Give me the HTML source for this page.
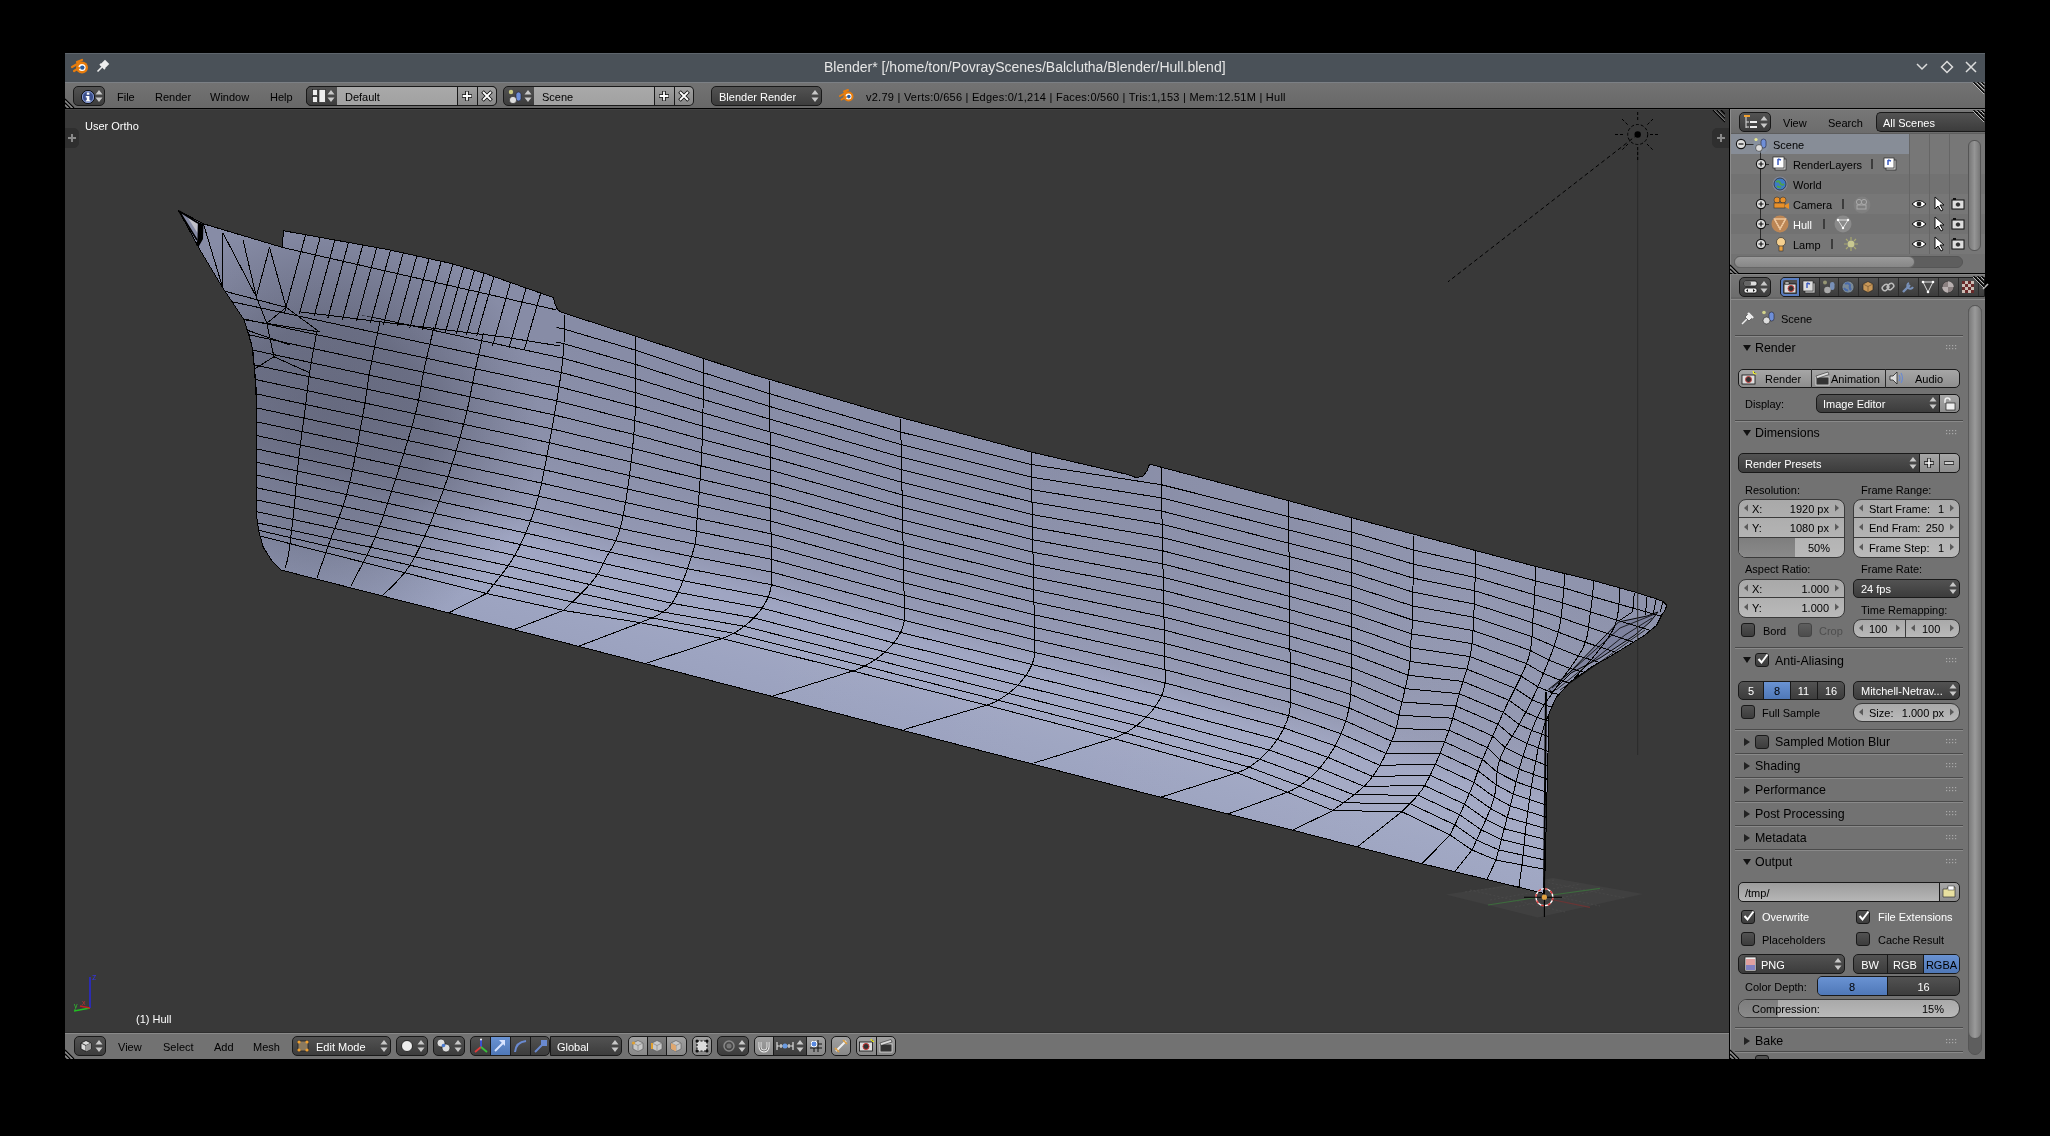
<!DOCTYPE html>
<html><head><meta charset="utf-8"><style>*{margin:0;padding:0;box-sizing:border-box}
html,body{width:2050px;height:1136px;background:#000;overflow:hidden;font-family:"Liberation Sans",sans-serif;font-size:11px;color:#000}
#win{position:absolute;left:0;top:0;width:2050px;height:1136px}
.a{position:absolute}
.t{will-change:transform;position:absolute;white-space:nowrap;line-height:12px;font-size:11px;color:#000}
.w{color:#fff}
/* generic widgets */
.menu{position:absolute;border:1px solid #191919;border-radius:4px;background:linear-gradient(#555,#373737)}
.reg{position:absolute;border:1px solid #191919;border-radius:4px;background:linear-gradient(#a6a6a6,#8c8c8c)}
.num{position:absolute;border:1px solid #191919;border-radius:4px;background:linear-gradient(#a0a0a0,#b4b4b4)}
.txt{position:absolute;border:1px solid #191919;border-radius:4px;background:linear-gradient(#999,#b2b2b2)}
.chk{position:absolute;width:14px;height:14px;border:1px solid #191919;border-radius:3px;background:linear-gradient(#555,#373737)}
.hdr{position:absolute;background:#727272}
.sepl{position:absolute;height:1px;background:#5f5f5f;border-bottom:1px solid #858585;height:2px}
.ptri{position:absolute;width:0;height:0}
.grip{position:absolute;width:13px;height:5px;background-image:radial-gradient(circle,#9a9a9a 0.8px,transparent 1px);background-size:3px 3px}
</style></head><body>
<div id="win">
<div class="a" style="left:65px;top:53px;width:1920px;height:1006px;background:#727272;"></div><div class="a" style="left:65px;top:53px;width:1920px;height:29px;background:#4a5158;"></div><div class="a" style="left:65px;top:53px;width:1920px;height:1px;background:#5e656c;"></div><div class="t" style="left:824px;top:61px;color:#e6e6e6;font-size:14px;">Blender* [/home/ton/PovrayScenes/Balclutha/Blender/Hull.blend]</div><svg class="a" style="left:70px;top:58px" width="20" height="18" viewBox="0 0 20 18"><circle cx="12" cy="9.5" r="6" fill="#e87d0d"/><circle cx="12" cy="9.5" r="3.6" fill="#fff"/><circle cx="12.3" cy="9.6" r="2.2" fill="#2b5b9a"/><path d="M2,9 L9,5 M4,13 L9,10 M7,4 L12,2" stroke="#e87d0d" stroke-width="2.2" stroke-linecap="round"/></svg><svg class="a" style="left:96px;top:59px" width="14" height="14" viewBox="0 0 14 14"><path d="M1.5,12.5 L6,8" stroke="#eee" stroke-width="1.6"/><path d="M5,6 L8,9 L12,5 L9,2Z M4,5 L9,10" stroke="#eee" stroke-width="1.8" fill="#eee"/></svg><svg class="a" style="left:1914px;top:60px" width="16" height="14" viewBox="0 0 16 14"><path d="M3,4 L8,9 L13,4" stroke="#dcdcdc" stroke-width="1.5" fill="none"/></svg><svg class="a" style="left:1939px;top:59px" width="16" height="16" viewBox="0 0 16 16"><path d="M8,2.5 L13.5,8 L8,13.5 L2.5,8Z" stroke="#dcdcdc" stroke-width="1.5" fill="none"/></svg><svg class="a" style="left:1963px;top:60px" width="16" height="14" viewBox="0 0 16 14"><path d="M3,2 L13,12 M13,2 L3,12" stroke="#dcdcdc" stroke-width="1.5"/></svg><div class="a" style="left:65px;top:82px;width:1920px;height:26px;background:linear-gradient(#737373,#686868);"></div><div class="a" style="left:65px;top:82px;width:1920px;height:1px;background:#7c8085;"></div><div class="a" style="left:65px;top:108px;width:1920px;height:1px;background:#000;"></div><svg class="a" style="left:65px;top:96px" width="12" height="12" viewBox="0 0 12 12"><path d="M0,3 L9,12 M0,7 L5,12 M0,11 L1,12" stroke="#000" stroke-width="1.3"/><path d="M0,4.5 L7.5,12 M0,8.5 L3.5,12" stroke="#a0a0a0" stroke-width="1"/></svg><svg class="a" style="left:1973px;top:82px" width="12" height="12" viewBox="0 0 12 12"><path d="M0.5,0 L11.5,11 M4.5,0 L11.5,7 M8.5,0 L11.5,3" stroke="#000" stroke-width="1.2"/><path d="M0,1 L11,12 M4,1 L11,8 M8,1 L11,4" stroke="#c8c8c8" stroke-width="0.9"/></svg><div class="a" style="left:73px;top:86px;width:32px;height:20px;background:linear-gradient(#525252,#3c3c3c);border:1px solid #191919;border-radius:5px;"></div><svg class="a" style="left:80px;top:89px" width="16" height="16" viewBox="0 0 16 16"><circle cx="8" cy="8" r="6.6" fill="#3b4f8c" stroke="#111" stroke-width="1"/><circle cx="8" cy="8" r="5.6" fill="none" stroke="#8fa3d8" stroke-width="0.9"/><rect x="6.8" y="3.5" width="2.6" height="2.2" fill="#fff"/><path d="M5.8,7 L9.4,7 L9.4,11.2 L10.4,11.2 L10.4,12.6 L5.8,12.6 L5.8,11.2 L6.8,11.2 L6.8,8.4 L5.8,8.4Z" fill="#fff"/></svg><svg class="a" style="left:94.5px;top:89px" width="8" height="14" viewBox="0 0 8 14"><path d="M4,1 L7.5,5.5 L0.5,5.5Z M4,13 L7.5,8.5 L0.5,8.5Z" fill="#c8c8c8"/></svg><div class="t" style="left:117px;top:91px;color:#000;font-size:11px;">File</div><div class="t" style="left:155px;top:91px;color:#000;font-size:11px;">Render</div><div class="t" style="left:210px;top:91px;color:#000;font-size:11px;">Window</div><div class="t" style="left:270px;top:91px;color:#000;font-size:11px;">Help</div><div class="a" style="left:306px;top:86px;width:191px;height:20px;background:#a3a3a3;border:1px solid #191919;border-radius:5px;"></div><div class="a" style="left:306px;top:86px;width:32px;height:20px;background:linear-gradient(#525252,#3c3c3c);border:1px solid #191919;border-radius:5px 0 0 5px"></div><svg class="a" style="left:312px;top:89px" width="14" height="14" viewBox="0 0 14 14"><rect x="0.5" y="0.5" width="5" height="6" fill="#eee" stroke="#111" stroke-width="0.6"/><rect x="0.5" y="7.5" width="5" height="6" fill="#eee" stroke="#111" stroke-width="0.6"/><rect x="7" y="0.5" width="6.5" height="13" fill="#eee" stroke="#111" stroke-width="0.6"/></svg><svg class="a" style="left:327px;top:89px" width="8" height="14" viewBox="0 0 8 14"><path d="M4,1 L7.5,5.5 L0.5,5.5Z M4,13 L7.5,8.5 L0.5,8.5Z" fill="#c8c8c8"/></svg><div class="a" style="left:337px;top:86px;width:121px;height:20px;background:linear-gradient(#a9a9a9,#a1a1a1);border-top:1px solid #191919;border-bottom:1px solid #191919"></div><div class="t" style="left:345px;top:91px;color:#000;font-size:11px;">Default</div><div class="a" style="left:457px;top:86px;width:40px;height:20px;background:linear-gradient(#a0a0a0,#878787);border:1px solid #191919;border-left:none;border-radius:0 5px 5px 0"></div><div class="a" style="left:457px;top:86px;width:1px;height:20px;background:#191919;"></div><div class="a" style="left:477px;top:86px;width:1px;height:20px;background:#191919;"></div><svg class="a" style="left:460px;top:89px" width="14" height="14" viewBox="0 0 14 14"><path d="M7,2 V12 M2,7 H12" stroke="#111" stroke-width="3.6"/><path d="M7,2.6 V11.4 M2.6,7 H11.4" stroke="#fff" stroke-width="1.8"/></svg><svg class="a" style="left:480px;top:89px" width="14" height="14" viewBox="0 0 14 14"><path d="M2.5,2.5 L11.5,11.5 M11.5,2.5 L2.5,11.5" stroke="#111" stroke-width="3.6"/><path d="M3,3 L11,11 M11,3 L3,11" stroke="#fff" stroke-width="1.8"/></svg><div class="a" style="left:503px;top:86px;width:32px;height:20px;background:linear-gradient(#525252,#3c3c3c);border:1px solid #191919;border-radius:5px 0 0 5px"></div><svg class="a" style="left:508px;top:89px" width="16" height="16" viewBox="0 0 16 16"><circle cx="3" cy="3" r="2.2" fill="#e8e890" opacity="0.8"/><rect x="8" y="3" width="5" height="9" rx="2.5" fill="#6f8fd8" stroke="#223" stroke-width="0.6"/><circle cx="5" cy="11" r="3.6" fill="#ddd" stroke="#222" stroke-width="0.6"/></svg><svg class="a" style="left:524px;top:89px" width="8" height="14" viewBox="0 0 8 14"><path d="M4,1 L7.5,5.5 L0.5,5.5Z M4,13 L7.5,8.5 L0.5,8.5Z" fill="#c8c8c8"/></svg><div class="a" style="left:534px;top:86px;width:121px;height:20px;background:linear-gradient(#a9a9a9,#a1a1a1);border-top:1px solid #191919;border-bottom:1px solid #191919"></div><div class="t" style="left:542px;top:91px;color:#000;font-size:11px;">Scene</div><div class="a" style="left:654px;top:86px;width:40px;height:20px;background:linear-gradient(#a0a0a0,#878787);border:1px solid #191919;border-left:none;border-radius:0 5px 5px 0"></div><div class="a" style="left:654px;top:86px;width:1px;height:20px;background:#191919;"></div><div class="a" style="left:674px;top:86px;width:1px;height:20px;background:#191919;"></div><svg class="a" style="left:657px;top:89px" width="14" height="14" viewBox="0 0 14 14"><path d="M7,2 V12 M2,7 H12" stroke="#111" stroke-width="3.6"/><path d="M7,2.6 V11.4 M2.6,7 H11.4" stroke="#fff" stroke-width="1.8"/></svg><svg class="a" style="left:677px;top:89px" width="14" height="14" viewBox="0 0 14 14"><path d="M2.5,2.5 L11.5,11.5 M11.5,2.5 L2.5,11.5" stroke="#111" stroke-width="3.6"/><path d="M3,3 L11,11 M11,3 L3,11" stroke="#fff" stroke-width="1.8"/></svg><div class="a" style="left:711px;top:86px;width:111px;height:20px;background:linear-gradient(#525252,#3c3c3c);border:1px solid #191919;border-radius:5px;"></div><div class="t" style="left:719px;top:91px;color:#fff;font-size:11px;">Blender Render</div><svg class="a" style="left:811px;top:89px" width="8" height="14" viewBox="0 0 8 14"><path d="M4,1 L7.5,5.5 L0.5,5.5Z M4,13 L7.5,8.5 L0.5,8.5Z" fill="#c8c8c8"/></svg><svg class="a" style="left:838px;top:88px" width="18" height="16" viewBox="0 0 18 16"><circle cx="10.5" cy="8.5" r="5" fill="#e87d0d"/><circle cx="10.5" cy="8.5" r="3" fill="#fff"/><circle cx="10.8" cy="8.6" r="1.8" fill="#2b5b9a"/><path d="M2,8 L8,4.5 M3.5,11.5 L8,9 M6,3.5 L10,2" stroke="#e87d0d" stroke-width="2" stroke-linecap="round"/></svg><div class="t" style="left:866px;top:91px;color:#000;font-size:11px;letter-spacing:0.25px">v2.79 | Verts:0/656 | Edges:0/1,214 | Faces:0/560 | Tris:1,153 | Mem:12.51M | Hull</div><div class="a" style="left:65px;top:109px;width:1664px;height:924px;background:#393939;"></div><div class="a" style="left:65px;top:109px;width:1664px;height:1px;background:#454545;"></div><div class="t" style="left:85px;top:120px;color:#fff;font-size:11px;">User Ortho</div><div class="t" style="left:136px;top:1013px;color:#fff;font-size:11px;">(1) Hull</div><svg class="a" style="left:1440px;top:870px" width="210" height="55" viewBox="0 0 210 55"><polygon points="5.7,24.4 113,8 203,24 97.7,47.4" fill="#404040"/><path d="M25,22 L115,10 M50,30 L140,14 M75,37 L165,19 M30,20 L125,42 M65,15 L160,36 M100,11 L185,28" stroke="#4a4a4a" stroke-width="0.8" stroke-dasharray="2,2"/></svg><svg class="a" style="left:0;top:0" width="2050" height="1136" viewBox="0 0 2050 1136">
<defs>
<linearGradient id="hg" gradientUnits="userSpaceOnUse" x1="900" y1="428.7" x2="827.5" y2="709.4">
<stop offset="0" stop-color="#878ca6"/><stop offset="0.4" stop-color="#8c91ab"/><stop offset="0.6" stop-color="#9398b3"/><stop offset="0.7" stop-color="#9fa5c2"/><stop offset="0.82" stop-color="#a1a7c3"/><stop offset="0.92" stop-color="#9da4c1"/><stop offset="1" stop-color="#9ba2bf"/></linearGradient>
<radialGradient id="hd" gradientUnits="userSpaceOnUse" cx="325" cy="430" r="215">
<stop offset="0" stop-color="#282a37" stop-opacity="0.39"/><stop offset="0.48" stop-color="#282a37" stop-opacity="0.33"/><stop offset="0.83" stop-color="#282a37" stop-opacity="0.1"/><stop offset="1" stop-color="#282a37" stop-opacity="0"/>
</radialGradient>
<linearGradient id="hx" gradientUnits="userSpaceOnUse" x1="700" y1="0" x2="1400" y2="0"><stop offset="0" stop-color="#fff" stop-opacity="0"/><stop offset="1" stop-color="#fff" stop-opacity="0.045"/></linearGradient>
<radialGradient id="hl" gradientUnits="userSpaceOnUse" cx="1480" cy="600" r="200">
<stop offset="0" stop-color="#c8cce8" stop-opacity="0.1"/><stop offset="1" stop-color="#c0c4e0" stop-opacity="0"/>
</radialGradient>
<clipPath id="hc"><polygon points="178.5,210.6 203.4,223.8 282.7,247.5 283.2,230.7 386.6,249.3 450,263.2 485,273.4 526,288 553.4,297.5 555,304 557.5,309.5 561.2,312.2 635.9,336.3 703.2,358.3 750,373.7 880,411.7 900.7,417.5 1031.2,452 1128,474.5 1136,477.6 1143,476 1147,471 1149.5,464.1 1288.5,500.7 1380,525.3 1536.7,566.7 1593.9,580.7 1635.3,592.2 1654.6,598.3 1663,601.5 1667,605.4 1664.5,611 1661.7,615 1656.4,625.6 1645,635 1631.8,643.2 1608.9,657.3 1593,666 1570,682 1556,697.8 1549,713.7 1544.5,891.5 1543.3,893.3 1420,863.2 1292,830 1150,794.5 772,696.4 500,626 280.8,570 272,561 263,546.8 258.5,530 256.6,516 256.3,400 254.5,369 251.9,346 244,319.7 222.8,288 200,250 186,224"/></clipPath>
<clipPath id="wc"><polygon points="222.8,290 290,305 380,318 483,330 545,342 556,344 557,309.5 561.2,312.2 635.9,336.3 703.2,358.3 750,373.7 880,411.7 900.7,417.5 1031.2,452 1128,474.5 1136,477.6 1143,476 1147,471 1149.5,464.1 1288.5,500.7 1380,525.3 1536.7,566.7 1593.9,580.7 1635.3,592.2 1654.6,598.3 1663,601.5 1667,605.4 1664.5,611 1661.7,615 1656.4,625.6 1645,635 1631.8,643.2 1608.9,657.3 1593,666 1570,682 1556,697.8 1549,713.7 1544.5,891.5 1543.3,893.3 1420,863.2 1292,830 1150,794.5 772,696.4 500,626 280.8,570 272,561 263,546.8 258.5,530 256.6,516 256.3,400 254.5,369 251.9,346 244,319.7"/></clipPath>
</defs>
<polygon points="178.5,210.6 203.4,223.8 282.7,247.5 283.2,230.7 386.6,249.3 450,263.2 485,273.4 526,288 553.4,297.5 555,304 557.5,309.5 561.2,312.2 635.9,336.3 703.2,358.3 750,373.7 880,411.7 900.7,417.5 1031.2,452 1128,474.5 1136,477.6 1143,476 1147,471 1149.5,464.1 1288.5,500.7 1380,525.3 1536.7,566.7 1593.9,580.7 1635.3,592.2 1654.6,598.3 1663,601.5 1667,605.4 1664.5,611 1661.7,615 1656.4,625.6 1645,635 1631.8,643.2 1608.9,657.3 1593,666 1570,682 1556,697.8 1549,713.7 1544.5,891.5 1543.3,893.3 1420,863.2 1292,830 1150,794.5 772,696.4 500,626 280.8,570 272,561 263,546.8 258.5,530 256.6,516 256.3,400 254.5,369 251.9,346 244,319.7 222.8,288 200,250 186,224" fill="url(#hg)"/>
<polygon points="178.5,210.6 203.4,223.8 282.7,247.5 283.2,230.7 386.6,249.3 450,263.2 485,273.4 526,288 553.4,297.5 555,304 557.5,309.5 561.2,312.2 635.9,336.3 703.2,358.3 750,373.7 880,411.7 900.7,417.5 1031.2,452 1128,474.5 1136,477.6 1143,476 1147,471 1149.5,464.1 1288.5,500.7 1380,525.3 1536.7,566.7 1593.9,580.7 1635.3,592.2 1654.6,598.3 1663,601.5 1667,605.4 1664.5,611 1661.7,615 1656.4,625.6 1645,635 1631.8,643.2 1608.9,657.3 1593,666 1570,682 1556,697.8 1549,713.7 1544.5,891.5 1543.3,893.3 1420,863.2 1292,830 1150,794.5 772,696.4 500,626 280.8,570 272,561 263,546.8 258.5,530 256.6,516 256.3,400 254.5,369 251.9,346 244,319.7 222.8,288 200,250 186,224" fill="url(#hd)"/>
<polygon points="178.5,210.6 203.4,223.8 282.7,247.5 283.2,230.7 386.6,249.3 450,263.2 485,273.4 526,288 553.4,297.5 555,304 557.5,309.5 561.2,312.2 635.9,336.3 703.2,358.3 750,373.7 880,411.7 900.7,417.5 1031.2,452 1128,474.5 1136,477.6 1143,476 1147,471 1149.5,464.1 1288.5,500.7 1380,525.3 1536.7,566.7 1593.9,580.7 1635.3,592.2 1654.6,598.3 1663,601.5 1667,605.4 1664.5,611 1661.7,615 1656.4,625.6 1645,635 1631.8,643.2 1608.9,657.3 1593,666 1570,682 1556,697.8 1549,713.7 1544.5,891.5 1543.3,893.3 1420,863.2 1292,830 1150,794.5 772,696.4 500,626 280.8,570 272,561 263,546.8 258.5,530 256.6,516 256.3,400 254.5,369 251.9,346 244,319.7 222.8,288 200,250 186,224" fill="url(#hx)"/>
<polygon points="178.5,210.6 203.4,223.8 282.7,247.5 283.2,230.7 386.6,249.3 450,263.2 485,273.4 526,288 553.4,297.5 555,304 557.5,309.5 561.2,312.2 635.9,336.3 703.2,358.3 750,373.7 880,411.7 900.7,417.5 1031.2,452 1128,474.5 1136,477.6 1143,476 1147,471 1149.5,464.1 1288.5,500.7 1380,525.3 1536.7,566.7 1593.9,580.7 1635.3,592.2 1654.6,598.3 1663,601.5 1667,605.4 1664.5,611 1661.7,615 1656.4,625.6 1645,635 1631.8,643.2 1608.9,657.3 1593,666 1570,682 1556,697.8 1549,713.7 1544.5,891.5 1543.3,893.3 1420,863.2 1292,830 1150,794.5 772,696.4 500,626 280.8,570 272,561 263,546.8 258.5,530 256.6,516 256.3,400 254.5,369 251.9,346 244,319.7 222.8,288 200,250 186,224" fill="url(#hl)"/>
<polygon points="1548.7,689.3 1569,673 1618.5,622 1647,616 1658,612 1650,622 1635,635 1600,658 1571,673 1552,692" fill="#7e829e" stroke="#000" stroke-width="1"/><path d="M1552,688 L1620,628 L1655,614 M1556,690 L1625,635 L1652,618 M1560,690 L1600,662 L1645,630" stroke="#000" stroke-width="0.8" fill="none"/>
<g clip-path="url(#hc)" fill="none" stroke="#000" stroke-width="1" shape-rendering="crispEdges">
<path d="M244.0,319.7 L244.6,321.8 L245.5,324.5 L246.6,327.8 L247.8,331.4 L249.0,335.2 L250.1,339.0 L251.1,342.7 L251.9,346.0 L252.5,349.0 L252.9,351.8 L253.3,354.5 L253.6,357.2 L253.8,359.9 L254.0,362.8 L254.2,365.8 L254.5,369.0 L254.8,371.9 L255.0,374.2 L255.3,376.3 L255.5,378.7 L255.8,381.8 L256.0,386.1 L256.2,392.0 L256.3,400.0 L256.4,411.1 L256.4,425.3 L256.4,441.5 L256.4,458.7 L256.4,475.8 L256.4,491.8 L256.5,505.5 L256.6,516.0 L256.8,523.1 L257.0,527.9 L257.2,530.8 L257.4,532.4 L257.7,533.2 L258.1,533.7 L258.5,534.4 L259.0,536.0 L259.6,538.1 L260.2,540.0 L260.9,541.8 L261.7,543.6 L262.5,545.2 L263.3,546.9 L264.2,548.4 L265.0,550.0 L265.8,551.5 L266.6,553.0 L267.5,554.4 L268.3,555.8 L269.2,557.2 L270.1,558.5 L271.0,559.7 L272.0,561.0 L273.1,562.3 L274.3,563.6 L275.6,564.9 L276.8,566.2 L278.1,567.4 L279.2,568.4 L280.1,569.3 L280.8,570.0 M317.0,331.0 L316.4,334.2 L315.6,338.5 L314.7,343.6 L313.6,349.3 L312.5,355.3 L311.4,361.4 L310.5,367.3 L309.6,372.7 L308.9,377.9 L308.2,383.2 L307.5,388.6 L306.9,393.9 L306.3,399.1 L305.8,404.1 L305.2,408.8 L304.7,413.2 L304.2,417.2 L303.7,420.7 L303.2,423.9 L302.8,427.0 L302.4,430.0 L301.9,433.1 L301.5,436.4 L301.0,440.0 L300.5,444.0 L300.0,448.3 L299.4,452.8 L298.9,457.4 L298.4,462.0 L297.9,466.5 L297.4,470.8 L297.0,474.8 L296.7,478.5 L296.4,481.9 L296.1,485.1 L295.9,488.2 L295.7,491.3 L295.4,494.5 L295.1,497.9 L294.8,501.6 L294.4,505.7 L293.9,510.1 L293.4,514.7 L292.8,519.4 L292.3,524.1 L291.8,528.6 L291.3,532.8 L290.8,536.5 L290.4,539.8 L290.0,542.9 L289.7,545.7 L289.3,548.2 L289.0,550.6 L288.7,552.9 L288.4,555.0 L288.0,557.0 L287.6,558.9 L287.2,560.7 L286.8,562.3 L286.3,563.8 L285.9,565.1 L285.5,566.2 L285.2,567.2 L285.0,568.0 M380.2,320.8 L379.4,324.6 L378.3,329.8 L377.0,335.9 L375.5,342.7 L374.0,349.8 L372.6,357.0 L371.2,363.8 L370.0,370.0 L369.0,375.5 L368.3,380.4 L367.6,385.2 L366.9,389.9 L366.2,394.8 L365.4,400.2 L364.4,406.2 L363.2,413.2 L361.7,421.4 L360.0,430.6 L358.2,440.7 L356.2,451.1 L354.2,461.6 L352.1,471.9 L349.9,481.5 L347.8,490.2 L345.6,498.0 L343.2,505.4 L340.8,512.4 L338.4,519.0 L335.9,525.3 L333.6,531.3 L331.3,537.0 L329.3,542.6 L327.4,548.1 L325.5,553.5 L323.7,558.7 L322.0,563.6 L320.4,568.1 L319.1,572.0 L317.9,575.4 L317.0,578.0 M434.0,327.0 L433.2,330.3 L432.2,334.7 L430.9,340.0 L429.5,345.8 L428.1,352.0 L426.6,358.2 L425.2,364.3 L424.0,370.0 L422.9,375.3 L422.0,380.4 L421.2,385.4 L420.3,390.4 L419.4,395.6 L418.4,401.1 L417.1,406.9 L415.6,413.2 L413.8,420.0 L411.7,427.3 L409.5,434.9 L407.1,442.8 L404.6,450.9 L402.1,459.0 L399.5,467.0 L397.0,474.8 L394.5,482.6 L391.9,490.5 L389.3,498.5 L386.6,506.4 L383.9,514.3 L381.2,522.0 L378.4,529.4 L375.5,536.5 L372.4,543.6 L369.0,550.8 L365.5,558.0 L361.9,565.0 L358.5,571.4 L355.5,577.2 L352.9,582.0 L351.0,585.7 M483.4,333.0 L482.7,336.3 L481.7,340.7 L480.6,346.0 L479.3,351.8 L477.9,358.0 L476.5,364.2 L475.2,370.3 L474.0,376.0 L472.9,381.2 L472.0,386.2 L471.1,391.0 L470.2,396.0 L469.2,401.1 L468.0,406.6 L466.6,412.7 L464.9,419.4 L462.9,426.9 L460.6,435.2 L458.1,443.9 L455.5,453.1 L452.6,462.4 L449.6,471.9 L446.5,481.2 L443.3,490.2 L439.9,499.3 L436.2,508.8 L432.4,518.4 L428.4,527.9 L424.3,537.1 L420.3,545.9 L416.3,553.9 L412.5,561.0 L408.6,567.2 L404.4,572.9 L400.1,577.9 L396.0,582.4 L392.0,586.4 L388.5,589.8 L385.5,592.6 L383.3,595.0 M565.0,314.6 L564.8,318.4 L564.7,323.3 L564.5,329.1 L564.3,335.6 L564.0,342.8 L563.5,350.5 L562.8,358.6 L561.9,367.0 L560.7,376.1 L559.1,386.3 L557.4,397.2 L555.5,408.4 L553.6,419.7 L551.6,430.6 L549.7,440.9 L548.0,450.2 L546.4,458.5 L545.0,466.2 L543.6,473.3 L542.3,480.1 L540.9,486.6 L539.3,492.9 L537.6,499.2 L535.7,505.7 L533.6,512.2 L531.3,518.7 L528.9,525.1 L526.4,531.4 L523.7,537.6 L520.9,543.6 L518.0,549.4 L515.0,555.0 L511.6,560.6 L507.8,566.3 L503.6,571.9 L499.5,577.3 L495.4,582.4 L491.8,586.8 L488.8,590.6 L486.5,593.5 L449.5,612.5 M635.9,336.2 L635.8,343.3 L635.9,352.8 L635.9,364.1 L635.9,376.6 L635.8,389.9 L635.5,403.3 L635.0,416.4 L634.3,428.6 L633.3,440.5 L632.1,453.0 L630.7,465.6 L629.1,478.1 L627.4,490.3 L625.7,501.7 L623.8,512.0 L622.0,521.0 L620.1,528.5 L618.0,534.9 L615.8,540.3 L613.6,544.9 L611.3,548.9 L609.1,552.6 L607.0,556.3 L605.0,560.0 L603.2,563.6 L601.7,566.7 L600.2,569.5 L598.8,572.1 L597.3,574.5 L595.6,577.1 L593.6,579.7 L591.2,582.7 L588.2,586.1 L584.6,589.9 L580.6,593.9 L576.5,598.0 L572.5,601.8 L568.8,605.3 L565.7,608.2 L563.5,610.4 L514.2,629.5 M703.6,359.3 L703.5,365.9 L703.4,374.7 L703.3,385.2 L703.2,396.9 L703.0,409.2 L702.8,421.5 L702.5,433.2 L702.1,444.0 L701.6,454.2 L701.1,464.6 L700.4,475.1 L699.7,485.3 L699.0,495.1 L698.3,504.3 L697.6,512.7 L697.0,520.0 L696.6,526.0 L696.3,530.6 L696.2,534.3 L696.0,537.4 L695.7,540.4 L695.1,543.5 L694.2,547.2 L692.9,551.9 L691.1,557.7 L688.9,564.3 L686.5,571.5 L683.8,578.9 L680.8,586.2 L677.8,593.0 L674.6,599.1 L671.3,604.2 L667.7,608.3 L663.5,611.6 L659.1,614.4 L654.5,616.7 L650.2,618.6 L646.2,620.2 L642.9,621.5 L640.5,622.7 L577.5,646.7 M769.5,381.0 L771.5,580.5 L771.3,584.7 L770.7,588.8 L769.7,592.8 L768.3,596.7 L766.6,600.5 L764.5,604.2 L762.2,607.8 L759.7,611.2 L756.9,614.5 L754.0,617.7 L750.9,620.7 L747.7,623.5 L744.4,626.1 L741.1,628.5 L737.8,630.8 L734.5,632.8 L731.2,634.6 L728.0,636.1 L724.9,637.4 L722.0,638.5 L644.0,664.0 M900.6,419.5 L904.5,616.0 L904.4,619.9 L903.7,623.7 L902.7,627.5 L901.2,631.1 L899.4,634.7 L897.2,638.2 L894.7,641.6 L892.0,644.9 L889.1,648.0 L886.0,651.0 L882.8,653.9 L879.4,656.5 L876.0,659.1 L872.5,661.4 L869.0,663.5 L865.6,665.5 L862.2,667.2 L858.9,668.7 L855.8,670.0 L852.8,671.0 L771.6,696.4 M1031.0,452.0 L1034.9,649.2 L1034.8,653.1 L1034.2,656.9 L1033.3,660.7 L1031.9,664.5 L1030.3,668.1 L1028.3,671.7 L1026.1,675.2 L1023.6,678.5 L1021.0,681.7 L1018.1,684.8 L1015.1,687.8 L1012.0,690.5 L1008.8,693.1 L1005.5,695.5 L1002.2,697.7 L999.0,699.7 L995.7,701.5 L992.5,703.0 L989.5,704.2 L986.5,705.2 L903.7,729.6 M1161.0,467.5 L1165.2,678.4 L1165.1,682.6 L1164.4,686.7 L1163.3,690.8 L1161.9,694.8 L1160.0,698.8 L1157.8,702.6 L1155.4,706.3 L1152.7,709.9 L1149.7,713.4 L1146.6,716.7 L1143.3,719.8 L1139.9,722.8 L1136.5,725.6 L1133.0,728.1 L1129.5,730.5 L1126.0,732.6 L1122.6,734.4 L1119.3,736.0 L1116.2,737.4 L1113.2,738.4 L1034.0,763.0 M1288.5,500.7 L1290.5,700.8 L1290.3,705.6 L1289.7,710.4 L1288.7,715.2 L1287.3,719.9 L1285.5,724.5 L1283.4,729.1 L1281.0,733.5 L1278.4,737.9 L1275.5,742.0 L1272.4,746.1 L1269.2,749.9 L1265.8,753.5 L1262.3,756.9 L1258.7,760.1 L1255.0,763.0 L1251.4,765.6 L1247.7,767.9 L1244.1,769.9 L1240.5,771.5 L1237.0,772.8 L1161.4,797.0 M1351.0,517.0 L1351.0,687.2 L1350.7,694.7 L1350.0,702.0 L1348.8,709.2 L1347.1,716.3 L1345.0,723.3 L1342.6,730.0 L1339.8,736.5 L1336.7,742.8 L1333.4,748.8 L1329.8,754.6 L1326.0,760.0 L1322.0,765.2 L1317.8,770.0 L1313.6,774.4 L1309.2,778.5 L1304.8,782.1 L1300.4,785.3 L1296.0,788.1 L1291.7,790.4 L1287.4,792.2 L1227.8,814.0 M1413.5,536.0 L1413.4,542.5 L1413.4,551.5 L1413.3,562.2 L1413.2,573.9 L1413.0,585.9 L1412.9,597.2 L1412.8,607.2 L1412.6,615.0 L1412.4,620.7 L1412.3,624.9 L1412.1,628.1 L1411.9,630.6 L1411.7,632.7 L1411.4,634.7 L1411.2,637.0 L1411.0,640.0 L1410.8,643.4 L1410.7,646.8 L1410.6,650.3 L1410.5,653.8 L1410.3,657.5 L1410.0,661.3 L1409.6,665.4 L1409.0,669.6 L1408.2,674.2 L1407.2,679.2 L1406.1,684.5 L1404.8,689.9 L1403.6,695.3 L1402.3,700.5 L1401.1,705.5 L1400.0,710.0 L1399.1,714.0 L1398.4,717.6 L1397.8,720.9 L1397.2,724.1 L1396.5,727.3 L1395.6,730.7 L1394.3,734.3 L1392.7,738.4 L1390.7,743.0 L1388.4,748.1 L1385.9,753.5 L1383.2,759.1 L1380.2,764.6 L1377.0,770.1 L1373.6,775.2 L1370.0,780.0 L1365.8,784.6 L1360.9,789.1 L1355.5,793.6 L1350.1,797.9 L1344.8,801.8 L1340.0,805.3 L1336.0,808.2 L1333.0,810.5 L1293.0,830.0 M1476.0,550.8 L1475.8,556.9 L1475.5,565.2 L1475.2,575.2 L1474.9,586.1 L1474.5,597.3 L1474.1,608.0 L1473.7,617.7 L1473.3,625.6 L1472.9,631.8 L1472.6,636.9 L1472.2,641.3 L1471.8,645.1 L1471.4,648.5 L1470.9,651.9 L1470.3,655.4 L1469.5,659.2 L1468.6,663.2 L1467.6,667.0 L1466.5,670.8 L1465.3,674.5 L1464.0,678.3 L1462.7,682.3 L1461.4,686.5 L1460.0,691.0 L1458.7,695.8 L1457.3,700.8 L1456.0,705.9 L1454.6,711.2 L1453.1,716.7 L1451.5,722.3 L1449.7,728.1 L1447.6,733.9 L1445.3,740.1 L1442.7,746.7 L1439.9,753.5 L1437.0,760.5 L1434.0,767.3 L1430.9,773.7 L1427.9,779.7 L1425.0,785.0 L1422.0,789.7 L1418.7,794.0 L1415.3,798.0 L1412.0,801.5 L1408.8,804.7 L1406.0,807.5 L1403.6,809.8 L1401.8,811.7 L1357.0,847.2 M1536.0,566.7 L1535.8,570.8 L1535.5,576.3 L1535.2,582.9 L1534.8,590.1 L1534.4,597.7 L1534.0,605.2 L1533.5,612.3 L1533.0,618.6 L1532.6,624.1 L1532.3,629.3 L1532.1,634.2 L1531.8,639.0 L1531.4,643.7 L1530.7,648.6 L1529.6,653.7 L1528.1,659.2 L1526.0,665.1 L1523.5,671.2 L1520.5,677.5 L1517.3,684.0 L1514.0,690.6 L1510.7,697.1 L1507.4,703.6 L1504.4,710.0 L1501.5,716.4 L1498.5,723.0 L1495.5,729.6 L1492.6,736.2 L1489.7,742.7 L1487.0,748.9 L1484.5,754.7 L1482.2,760.0 L1480.3,764.7 L1478.7,768.8 L1477.4,772.4 L1476.2,775.9 L1475.1,779.3 L1473.8,782.8 L1472.3,786.6 L1470.5,791.0 L1468.2,796.2 L1465.5,802.1 L1462.6,808.5 L1459.5,814.9 L1456.6,821.2 L1453.9,826.8 L1451.6,831.5 L1450.0,835.0 L1421.3,864.4 M1565.0,573.0 L1564.7,576.3 L1564.4,580.9 L1564.0,586.3 L1563.5,592.2 L1563.0,598.4 L1562.5,604.5 L1561.9,610.1 L1561.3,615.0 L1560.7,619.1 L1560.2,622.6 L1559.7,625.8 L1559.1,628.8 L1558.4,631.9 L1557.5,635.3 L1556.4,639.0 L1555.0,643.4 L1553.2,648.5 L1551.1,654.3 L1548.7,660.5 L1546.1,667.0 L1543.4,673.5 L1540.8,679.8 L1538.3,685.7 L1536.0,691.0 L1533.9,695.7 L1531.9,699.9 L1530.1,703.8 L1528.2,707.4 L1526.3,711.0 L1524.4,714.7 L1522.4,718.5 L1520.2,722.6 L1517.8,727.0 L1515.1,731.5 L1512.2,736.1 L1509.3,740.8 L1506.5,745.5 L1503.8,750.3 L1501.5,755.1 L1499.6,760.0 L1498.2,764.8 L1497.4,769.7 L1496.9,774.5 L1496.5,779.4 L1496.2,784.4 L1495.7,789.5 L1494.8,794.8 L1493.4,800.3 L1491.3,806.4 L1488.6,813.2 L1485.5,820.4 L1482.3,827.7 L1479.1,834.6 L1476.2,840.8 L1473.8,846.1 L1472.0,850.0 L1453.3,873.5 M1594.0,581.0 L1593.7,583.6 L1593.3,587.2 L1592.9,591.4 L1592.4,596.0 L1591.9,600.9 L1591.3,605.9 L1590.6,610.6 L1590.0,615.0 L1589.4,619.0 L1589.0,622.9 L1588.6,626.7 L1588.1,630.5 L1587.5,634.4 L1586.6,638.3 L1585.3,642.4 L1583.6,646.6 L1581.3,651.1 L1578.5,655.8 L1575.3,660.7 L1571.8,665.6 L1568.3,670.5 L1564.7,675.4 L1561.4,680.1 L1558.3,684.6 L1555.5,688.8 L1552.7,692.7 L1550.0,696.4 L1547.4,700.1 L1544.9,703.8 L1542.4,707.7 L1540.0,711.8 L1537.7,716.3 L1535.4,721.2 L1533.3,726.5 L1531.1,732.0 L1529.1,737.6 L1527.1,743.3 L1525.3,749.0 L1523.5,754.6 L1521.8,760.0 L1520.3,765.1 L1519.0,769.9 L1517.8,774.5 L1516.7,779.1 L1515.6,783.9 L1514.5,788.9 L1513.2,794.4 L1511.7,800.3 L1509.9,807.2 L1507.8,815.3 L1505.5,823.9 L1503.2,832.7 L1501.0,841.1 L1499.0,848.8 L1497.2,855.3 L1496.0,860.0 L1486.5,880.4 M1620.0,588.0 L1619.7,590.8 L1619.5,594.7 L1619.3,599.2 L1618.9,604.3 L1618.4,609.6 L1617.7,614.9 L1616.7,619.9 L1615.3,624.4 L1613.6,628.5 L1611.5,632.4 L1609.3,636.1 L1606.7,639.8 L1604.0,643.5 L1601.1,647.2 L1598.1,651.0 L1595.0,655.0 L1591.7,659.2 L1588.0,663.4 L1584.1,667.7 L1580.1,672.1 L1576.0,676.5 L1572.1,681.0 L1568.4,685.5 L1565.0,690.0 L1561.9,694.3 L1558.9,698.4 L1556.1,702.3 L1553.4,706.4 L1550.8,710.7 L1548.4,715.5 L1546.0,720.8 L1543.8,727.0 L1541.7,734.1 L1539.7,741.9 L1537.8,750.4 L1536.1,759.3 L1534.4,768.5 L1532.9,777.7 L1531.4,786.9 L1530.0,795.7 L1528.7,804.8 L1527.4,814.6 L1526.2,824.7 L1525.1,834.6 L1524.2,844.1 L1523.3,852.5 L1522.6,859.6 L1522.0,865.0 L1518.6,889.5 M1634.3,592.7 L1632.7,611.7 L1618.5,621.2 M1647.0,597.4 L1645.4,614.9 M1656.0,600.0 L1653.0,615.0 M1663.0,602.0 L1660.0,612.0 M203.4,223.8 L222.8,288.0 M222.8,232.6 L222.8,288.0 M222.8,232.6 L256.3,296.8 M243.0,239.6 L256.3,296.8 M269.5,247.5 L256.3,296.8 M269.5,247.5 L286.2,307.4 M222.8,290.7 L286.2,307.4 M286.2,307.4 L319.6,332.0 M286.2,307.4 L266.8,323.2 M266.8,323.2 L273.9,356.7 M256.3,296.8 L266.8,323.2 M244.0,319.7 L319.6,332.0 M273.9,356.7 L254.5,369.0 M273.9,356.7 L309.0,372.5 M247.5,330.3 L290.0,345.0 M282.7,247.5 L556.0,309.8 M298.8,311.7 L503.7,337.0 L560.0,346.0 M305.6,234.7 L284.5,312.6 M320.2,237.4 L299.3,314.4 M334.9,240.0 L314.1,316.2 M348.5,242.4 L327.9,317.9 M362.8,245.0 L342.4,319.7 M376.8,247.5 L356.5,321.4 M390.5,250.2 L370.4,323.2 M403.2,252.9 L383.4,324.8 M416.8,255.9 L397.3,326.4 M429.1,258.6 L409.8,328.0 M441.2,261.3 L422.2,329.5 M452.9,264.0 L434.2,331.0 M463.7,267.2 L445.4,332.3 M474.4,270.3 L456.5,333.6 M484.1,273.1 L466.5,334.9 M493.9,276.6 L476.8,336.1 M510.5,282.5 L492.5,346.2 M526.1,288.0 L508.9,348.1 M540.7,293.1 L524.2,349.9"/>
</g>
<g clip-path="url(#wc)" fill="none" stroke="#000" stroke-width="1" shape-rendering="crispEdges">
<path d="M200.0,250.8 L256.0,262.8 L564.5,329.2 L635.9,350.3 L703.4,372.7 L769.6,393.7 L900.9,432.1 L1031.3,464.5 L1161.3,484.7 L1288.7,516.6 L1351.0,531.9 L1413.4,550.0 L1475.6,564.1 L1535.3,580.8 L1563.9,587.9 L1592.3,596.5 L1618.9,604.1 L1734.3,637.0 M200.0,265.5 L256.0,277.5 L563.9,343.7 L635.9,364.5 L703.3,386.1 L769.8,406.5 L901.1,444.6 L1031.5,477.1 L1161.6,497.9 L1288.8,529.9 L1351.0,545.4 L1413.2,564.1 L1475.2,577.5 L1534.6,594.8 L1562.6,602.8 L1590.5,611.9 L1616.6,620.0 L1731.4,655.1 M200.0,280.2 L256.0,292.2 L562.9,358.2 L635.9,378.6 L703.1,399.4 L769.9,419.2 L901.4,457.2 L1031.8,489.6 L1161.9,511.1 L1288.9,543.2 L1351.0,559.0 L1413.1,578.1 L1474.7,590.8 L1533.7,608.8 L1560.9,617.6 L1588.5,627.3 L1610.2,634.5 L1724.0,672.6 M200.0,294.9 L256.0,306.9 L561.2,372.5 L635.7,392.7 L702.9,412.8 L770.0,431.9 L901.6,469.7 L1032.0,502.1 L1162.1,524.3 L1289.1,556.5 L1351.0,572.5 L1413.0,592.1 L1474.3,604.1 L1532.7,622.8 L1558.3,632.2 L1585.3,642.3 L1600.9,647.4 L1715.0,684.7 M200.0,309.6 L256.0,321.6 L559.1,386.8 L635.4,406.7 L702.6,426.1 L770.1,444.7 L901.9,482.3 L1032.3,514.6 L1162.4,537.6 L1289.2,569.7 L1351.0,586.1 L1412.8,606.0 L1473.7,617.3 L1532.0,636.7 L1554.0,646.3 L1578.4,656.0 L1591.1,659.8 L1706.0,694.4 M200.0,324.2 L256.0,336.3 L556.8,400.9 L634.8,420.7 L702.3,439.4 L770.3,457.4 L902.1,494.9 L1032.5,527.2 L1162.7,550.8 L1289.3,583.0 L1351.0,599.6 L1412.5,620.0 L1473.0,630.5 L1530.3,650.4 L1548.8,660.1 L1569.8,668.4 L1580.7,671.4 L1696.5,702.9 M200.0,338.8 L256.0,350.8 L554.4,415.0 L633.8,434.5 L701.7,452.7 L770.4,470.1 L902.4,507.4 L1032.8,539.7 L1162.9,564.0 L1289.5,596.3 L1351.0,613.2 L1411.5,633.9 L1472.0,643.6 L1526.5,663.7 L1543.4,673.5 L1561.0,680.6 L1570.5,683.0 L1687.0,711.8 M200.0,353.2 L256.0,365.3 L551.9,428.9 L632.5,448.3 L701.0,465.9 L770.5,482.9 L902.6,520.0 L1033.0,552.2 L1163.2,577.2 L1289.6,609.6 L1351.0,626.7 L1410.7,647.7 L1470.0,656.6 L1521.1,676.2 L1537.8,686.8 L1552.6,692.9 L1561.3,695.1 L1677.5,725.0 M200.0,367.5 L256.0,379.6 L549.4,442.7 L631.1,462.0 L700.1,479.1 L770.6,495.6 L902.9,532.5 L1033.3,564.7 L1163.5,590.4 L1289.7,622.8 L1351.0,640.3 L1410.0,661.5 L1467.0,669.2 L1515.1,688.3 L1532.0,699.8 L1544.2,704.8 L1552.8,707.4 L1667.9,741.5 M200.0,381.7 L256.0,393.8 L546.9,456.3 L629.4,475.6 L699.2,492.2 L770.8,508.3 L903.1,545.1 L1033.5,577.3 L1163.7,603.6 L1289.9,636.1 L1351.0,653.8 L1408.0,675.2 L1463.0,681.5 L1509.1,700.3 L1525.7,712.3 L1537.2,717.4 L1546.2,720.5 L1659.8,759.2 M200.0,395.8 L256.0,407.8 L544.3,469.8 L627.6,489.0 L698.2,505.3 L770.9,521.1 L903.4,557.7 L1033.8,589.8 L1164.0,616.9 L1290.0,649.4 L1351.0,667.4 L1405.1,688.6 L1459.2,693.7 L1503.4,712.3 L1519.1,724.5 L1531.7,730.4 L1541.7,734.1 L1654.3,775.6 M200.0,409.6 L256.0,421.7 L541.6,483.1 L625.5,502.4 L697.1,518.3 L771.0,533.8 L903.6,570.2 L1034.0,602.3 L1164.3,630.1 L1290.1,662.7 L1351.0,680.9 L1401.9,701.9 L1456.0,706.0 L1497.9,724.2 L1512.1,736.2 L1527.1,743.5 L1538.4,747.8 L1650.8,789.9 M200.0,423.3 L256.0,435.4 L538.5,496.1 L623.1,515.5 L696.3,531.3 L771.2,546.5 L903.9,582.8 L1034.3,614.8 L1164.5,643.3 L1290.3,675.9 L1350.7,694.4 L1398.9,715.2 L1452.7,718.2 L1492.6,736.0 L1505.3,747.7 L1522.9,756.4 L1535.7,761.2 L1648.3,802.8 M200.0,436.8 L256.0,448.8 L534.7,508.8 L620.1,528.4 L695.0,544.2 L771.3,559.3 L904.1,595.3 L1034.5,627.4 L1164.8,656.5 L1290.4,689.2 L1349.0,707.9 L1396.2,728.5 L1448.9,730.1 L1487.5,747.7 L1499.7,759.6 L1519.2,769.2 L1533.4,774.3 L1646.4,814.9 M200.0,450.0 L256.0,462.1 L530.4,521.1 L615.6,540.7 L691.5,556.5 L771.4,572.0 L904.4,607.9 L1034.8,639.9 L1165.0,669.7 L1290.4,702.5 L1345.7,721.0 L1391.5,741.2 L1444.6,741.8 L1482.5,759.3 L1497.1,772.2 L1516.1,781.8 L1531.4,787.1 L1644.7,826.5 M200.0,462.9 L256.0,475.0 L525.7,533.0 L609.5,552.1 L687.4,568.7 L771.3,584.7 L904.3,620.4 L1034.8,652.4 L1165.0,682.9 L1288.5,715.6 L1341.0,733.7 L1386.0,753.4 L1440.1,753.1 L1478.0,770.8 L1496.2,784.8 L1513.3,794.1 L1529.5,799.5 L1643.3,837.3 M200.0,475.6 L256.0,487.6 L520.5,544.5 L603.3,563.4 L683.0,580.7 L768.1,597.0 L900.5,632.4 L1031.9,664.5 L1161.5,695.6 L1283.9,728.0 L1335.0,745.8 L1379.8,765.3 L1435.3,764.3 L1474.0,782.4 L1494.2,797.0 L1510.2,806.0 L1527.8,811.5 L1642.4,847.2 M200.0,487.8 L256.0,499.8 L514.7,555.4 L597.3,574.5 L678.1,592.4 L762.0,608.1 L893.7,642.9 L1025.9,675.5 L1154.8,707.0 L1277.3,739.5 L1327.9,757.3 L1372.7,776.5 L1430.2,775.2 L1469.4,793.5 L1490.5,808.5 L1507.2,817.5 L1526.4,823.0 L1641.7,856.3 M200.0,499.5 L256.0,511.5 L508.1,565.7 L589.6,584.5 L671.9,603.3 L753.8,617.9 L885.0,651.9 L1017.8,685.1 L1146.2,717.0 L1269.1,750.0 L1319.5,768.0 L1363.9,786.3 L1424.6,785.6 L1464.5,804.2 L1486.0,819.4 L1504.3,828.7 L1525.2,834.2 L1641.2,864.9 M200.0,510.6 L256.0,522.6 L501.0,575.3 L581.1,593.5 L662.9,612.0 L744.2,626.3 L875.1,659.6 L1008.4,693.4 L1136.3,725.7 L1259.6,759.2 L1310.1,777.7 L1353.9,794.9 L1417.8,795.1 L1459.6,814.7 L1481.3,829.9 L1501.4,839.5 L1524.1,844.9 L1640.8,873.0 M200.0,517.7 L256.0,529.7 L493.7,584.5 L572.3,602.0 L651.9,617.9 L733.6,633.3 L864.4,666.1 L998.0,700.2 L1125.2,733.0 L1249.0,767.1 L1299.4,786.0 L1343.4,802.8 L1409.9,803.6 L1454.8,824.9 L1476.6,840.1 L1498.7,849.9 L1523.0,855.2 L1640.3,880.6 M200.0,522.9 L256.0,535.0 L486.5,593.5 L563.5,610.4 L640.5,622.7 L722.0,638.5 L852.8,671.0 L986.5,705.2 L1113.2,738.4 L1237.0,772.8 L1287.4,792.2 L1333.0,810.5 L1401.8,811.7 L1450.0,835.0 L1472.0,850.0 L1496.0,860.0 L1522.0,865.0 L1639.8,887.7"/>
</g>
<polygon points="178.5,210.6 203.4,223.8 282.7,247.5 283.2,230.7 386.6,249.3 450,263.2 485,273.4 526,288 553.4,297.5 555,304 557.5,309.5 561.2,312.2 635.9,336.3 703.2,358.3 750,373.7 880,411.7 900.7,417.5 1031.2,452 1128,474.5 1136,477.6 1143,476 1147,471 1149.5,464.1 1288.5,500.7 1380,525.3 1536.7,566.7 1593.9,580.7 1635.3,592.2 1654.6,598.3 1663,601.5 1667,605.4 1664.5,611 1661.7,615 1656.4,625.6 1645,635 1631.8,643.2 1608.9,657.3 1593,666 1570,682 1556,697.8 1549,713.7 1544.5,891.5 1543.3,893.3 1420,863.2 1292,830 1150,794.5 772,696.4 500,626 280.8,570 272,561 263,546.8 258.5,530 256.6,516 256.3,400 254.5,369 251.9,346 244,319.7 222.8,288 200,250 186,224" fill="none" stroke="#000" stroke-width="1" shape-rendering="crispEdges"/>
<line x1="1546" y1="692" x2="1544" y2="893" stroke="#000" stroke-width="2"/>
<polygon points="188,218 197.5,223.5 197.5,233" fill="#c0c0c8"/><polygon points="198,222 203.5,224 203,239 199,246 196.5,246 197.5,238" fill="#000"/><path d="M179,211 L198,223 M179,211 L197,240" stroke="#000" stroke-width="1.6"/>
</svg><svg class="a" style="left:1440px;top:110px" width="260" height="660" viewBox="0 0 260 660"><line x1="197.7" y1="24.5" x2="8" y2="171.8" stroke="#000" stroke-width="1" stroke-dasharray="4,3"/>
<line x1="197.7" y1="40" x2="197.7" y2="645" stroke="#2a2a2a" stroke-width="1"/>
<circle cx="197.7" cy="24.5" r="3.2" fill="#000"/>
<circle cx="197.7" cy="24.5" r="10" fill="none" stroke="#000" stroke-width="1" stroke-dasharray="3,2"/>
<path d="M197.7,2 V12 M197.7,37 V50 M175,24.5 H185 M210,24.5 H220 M182,9 L188,15 M207,34 L213,40 M213,9 L207,15 M188,34 L182,40" stroke="#000" stroke-width="1" stroke-dasharray="3,2"/></svg><svg class="a" style="left:1440px;top:870px" width="210" height="55" viewBox="0 0 210 55"><line x1="48" y1="35" x2="96" y2="27.5" stroke="#3d6a3d" stroke-width="1.2"/><line x1="112" y1="25" x2="160" y2="18.3" stroke="#3d6a3d" stroke-width="1.2"/>
<line x1="114" y1="30" x2="150" y2="37.4" stroke="#6a3535" stroke-width="1.2"/>
<circle cx="104.4" cy="27.2" r="8.5" fill="none" stroke="#fff" stroke-width="1.3"/><circle cx="104.4" cy="27.2" r="8.5" fill="none" stroke="#d33" stroke-width="1.3" stroke-dasharray="3.3,3.3"/>
<path d="M84,27.2 H122 M104.4,8 V47" stroke="#000" stroke-width="1.1"/>
<circle cx="104.4" cy="27.2" r="2.6" fill="#e0a040"/></svg><svg class="a" style="left:68px;top:968px" width="40" height="50" viewBox="0 0 40 50"><line x1="22" y1="40" x2="22" y2="9" stroke="#2a2ad0" stroke-width="1.6"/><text x="24" y="12" font-size="9" fill="#3535d8" font-family="Liberation Sans">z</text><line x1="22" y1="40" x2="6" y2="43" stroke="#22c022" stroke-width="1.6"/><line x1="22" y1="40" x2="12" y2="38" stroke="#c02222" stroke-width="1.4"/><text x="14" y="37" font-size="7" fill="#c03030" font-family="Liberation Sans">x</text><text x="6" y="40" font-size="7" fill="#30c030" font-family="Liberation Sans">y</text></svg><svg class="a" style="left:1711px;top:110px" width="14" height="14" viewBox="0 0 14 14"><path d="M2,0 L14,12 M6,0 L14,8 M10,0 L14,4" stroke="#000" stroke-width="1.2"/><path d="M3.2,0 L14,10.8 M7.2,0 L14,6.8" stroke="#9a9a9a" stroke-width="0.8"/></svg><div class="a" style="left:1712px;top:128px;width:17px;height:20px;background:#2f2f2f;border:1px solid #2f2f2f;border-radius:5px 0 0 5px;"></div><svg class="a" style="left:1716px;top:133px" width="10" height="10" viewBox="0 0 10 10"><path d="M5,1 V9 M1,5 H9" stroke="#8a8a8a" stroke-width="2"/></svg><div class="a" style="left:65px;top:128px;width:14px;height:20px;background:#2f2f2f;border:1px solid #2f2f2f;border-radius:0 5px 5px 0;"></div><svg class="a" style="left:67px;top:133px" width="10" height="10" viewBox="0 0 10 10"><path d="M5,1 V9 M1,5 H9" stroke="#8a8a8a" stroke-width="2"/></svg><div class="a" style="left:65px;top:1033px;width:1664px;height:26px;background:#727272;"></div><div class="a" style="left:65px;top:1033px;width:1664px;height:1px;background:#8a8a8a;"></div><div class="a" style="left:65px;top:1032px;width:1664px;height:1px;background:#2e2e2e;"></div><svg class="a" style="left:65px;top:1047px" width="12" height="12" viewBox="0 0 12 12"><path d="M0,3 L9,12 M0,7 L5,12 M0,11 L1,12" stroke="#000" stroke-width="1.3"/><path d="M0,4.5 L7.5,12 M0,8.5 L3.5,12" stroke="#a0a0a0" stroke-width="1"/></svg><div class="a" style="left:74px;top:1036px;width:32px;height:20px;background:linear-gradient(#525252,#3c3c3c);border:1px solid #191919;border-radius:5px;"></div><svg class="a" style="left:79px;top:1039px" width="14" height="14" viewBox="0 0 14 14"><path d="M2,4 L7,1.5 L12,4 L12,10 L7,12.5 L2,10Z" fill="#ddd" stroke="#111" stroke-width="0.8"/><path d="M2,4 L7,6.5 L12,4 M7,6.5 V12.5" stroke="#111" stroke-width="0.8" fill="none"/><path d="M7,6.5 L12,4 L12,10 L7,12.5Z" fill="#999"/></svg><svg class="a" style="left:95px;top:1039px" width="8" height="14" viewBox="0 0 8 14"><path d="M4,1 L7.5,5.5 L0.5,5.5Z M4,13 L7.5,8.5 L0.5,8.5Z" fill="#c8c8c8"/></svg><div class="t" style="left:118px;top:1041px;color:#000;font-size:11px;">View</div><div class="t" style="left:163px;top:1041px;color:#000;font-size:11px;">Select</div><div class="t" style="left:214px;top:1041px;color:#000;font-size:11px;">Add</div><div class="t" style="left:253px;top:1041px;color:#000;font-size:11px;">Mesh</div><div class="a" style="left:292px;top:1036px;width:99px;height:20px;background:linear-gradient(#525252,#3c3c3c);border:1px solid #191919;border-radius:5px;"></div><svg class="a" style="left:296px;top:1039px" width="14" height="14" viewBox="0 0 14 14"><rect x="2" y="2" width="10" height="10" fill="#8a7a60" stroke="#222" stroke-width="0.8"/><circle cx="3" cy="3" r="1.6" fill="#f0a030"/><circle cx="11" cy="3" r="1.6" fill="#f0a030"/><circle cx="3" cy="11" r="1.6" fill="#f0a030"/><circle cx="11" cy="11" r="1.6" fill="#f0a030"/></svg><div class="t" style="left:316px;top:1041px;color:#fff;font-size:11px;">Edit Mode</div><svg class="a" style="left:380px;top:1039px" width="8" height="14" viewBox="0 0 8 14"><path d="M4,1 L7.5,5.5 L0.5,5.5Z M4,13 L7.5,8.5 L0.5,8.5Z" fill="#c8c8c8"/></svg><div class="a" style="left:396px;top:1036px;width:32px;height:20px;background:linear-gradient(#525252,#3c3c3c);border:1px solid #191919;border-radius:5px;"></div><svg class="a" style="left:400px;top:1039px" width="14" height="14" viewBox="0 0 14 14"><circle cx="7" cy="7" r="5.5" fill="#eee" stroke="#111" stroke-width="0.8"/></svg><svg class="a" style="left:417px;top:1039px" width="8" height="14" viewBox="0 0 8 14"><path d="M4,1 L7.5,5.5 L0.5,5.5Z M4,13 L7.5,8.5 L0.5,8.5Z" fill="#c8c8c8"/></svg><div class="a" style="left:433px;top:1036px;width:32px;height:20px;background:linear-gradient(#525252,#3c3c3c);border:1px solid #191919;border-radius:5px;"></div><svg class="a" style="left:436px;top:1038px" width="16" height="16" viewBox="0 0 16 16"><circle cx="5" cy="5" r="4" fill="#ddd" stroke="#111" stroke-width="0.6"/><circle cx="10" cy="10" r="4" fill="#ddd" stroke="#111" stroke-width="0.6"/><circle cx="7.5" cy="7.5" r="1.8" fill="#4a7ad0"/></svg><svg class="a" style="left:454px;top:1039px" width="8" height="14" viewBox="0 0 8 14"><path d="M4,1 L7.5,5.5 L0.5,5.5Z M4,13 L7.5,8.5 L0.5,8.5Z" fill="#c8c8c8"/></svg><div class="a" style="left:470px;top:1036px;width:80px;height:20px;background:linear-gradient(#525252,#3c3c3c);border:1px solid #191919;border-radius:5px;"></div><div class="a" style="left:490px;top:1037px;width:20px;height:18px;background:linear-gradient(#6a93d3,#4f78b8);"></div><div class="a" style="left:490px;top:1036px;width:1px;height:20px;background:#191919;"></div><div class="a" style="left:510px;top:1036px;width:1px;height:20px;background:#191919;"></div><div class="a" style="left:530px;top:1036px;width:1px;height:20px;background:#191919;"></div><svg class="a" style="left:472px;top:1037px" width="18" height="18" viewBox="0 0 18 18"><path d="M9,10 V2" stroke="#3a50e0" stroke-width="1.8"/><path d="M9,10 L3,15" stroke="#e03a3a" stroke-width="1.8"/><path d="M9,10 L15,15" stroke="#3ac03a" stroke-width="1.8"/><circle cx="9" cy="2.5" r="1" fill="#fff"/></svg><svg class="a" style="left:491px;top:1037px" width="18" height="18" viewBox="0 0 18 18"><path d="M4,14 L13,5" stroke="#d8e4ff" stroke-width="2"/><path d="M14,3 L14,9 L8,3Z" fill="#d8e4ff"/></svg><svg class="a" style="left:511px;top:1037px" width="18" height="18" viewBox="0 0 18 18"><path d="M4,15 Q5,5 15,4" stroke="#6a8ad0" stroke-width="2" fill="none"/></svg><svg class="a" style="left:531px;top:1037px" width="18" height="18" viewBox="0 0 18 18"><path d="M4,15 L11,8" stroke="#6a8ad0" stroke-width="2"/><rect x="10" y="3" width="6" height="6" fill="#6a8ad0"/></svg><div class="a" style="left:550px;top:1036px;width:72px;height:20px;background:linear-gradient(#525252,#3c3c3c);border:1px solid #191919;border-radius:0 5px 5px 0;"></div><div class="t" style="left:557px;top:1041px;color:#fff;font-size:11px;">Global</div><svg class="a" style="left:611px;top:1039px" width="8" height="14" viewBox="0 0 8 14"><path d="M4,1 L7.5,5.5 L0.5,5.5Z M4,13 L7.5,8.5 L0.5,8.5Z" fill="#c8c8c8"/></svg><div class="a" style="left:628px;top:1036px;width:59px;height:20px;background:linear-gradient(#a0a0a0,#888);border:1px solid #191919;border-radius:5px;"></div><div class="a" style="left:647px;top:1037px;width:19px;height:18px;background:linear-gradient(#7c7c7c,#6a6a6a);"></div><div class="a" style="left:647px;top:1036px;width:1px;height:20px;background:#191919;"></div><div class="a" style="left:666px;top:1036px;width:1px;height:20px;background:#191919;"></div><svg class="a" style="left:630px;top:1038px" width="16" height="16" viewBox="0 0 16 16"><path d="M3,5 L8,2.5 L13,5 L13,11 L8,13.5 L3,11Z" fill="#c8c8c8" stroke="#555" stroke-width="0.6"/><path d="M3,5 L8,7.5 L13,5 M8,7.5 V13.5" stroke="#777" stroke-width="0.6" fill="none"/><circle cx="3.5" cy="5" r="1.6" fill="#e0a030"/></svg><svg class="a" style="left:649px;top:1038px" width="16" height="16" viewBox="0 0 16 16"><path d="M3,5 L8,2.5 L13,5 L13,11 L8,13.5 L3,11Z" fill="#c8c8c8" stroke="#555" stroke-width="0.6"/><path d="M3,5 L8,7.5 L13,5 M8,7.5 V13.5" stroke="#777" stroke-width="0.6" fill="none"/><path d="M3,5 V11" stroke="#e0a030" stroke-width="2"/></svg><svg class="a" style="left:668px;top:1038px" width="16" height="16" viewBox="0 0 16 16"><path d="M3,5 L8,2.5 L13,5 L13,11 L8,13.5 L3,11Z" fill="#c8c8c8" stroke="#555" stroke-width="0.6"/><path d="M3,5 L8,7.5 L13,5 M8,7.5 V13.5" stroke="#777" stroke-width="0.6" fill="none"/><path d="M3,5 L8,7.5 L8,13.5 L3,11Z" fill="#e0a870"/></svg><div class="a" style="left:692px;top:1036px;width:20px;height:20px;background:linear-gradient(#a0a0a0,#888);border:1px solid #191919;border-radius:5px;"></div><svg class="a" style="left:694px;top:1038px" width="16" height="16" viewBox="0 0 16 16"><rect x="3" y="3" width="10" height="10" fill="#ddd" stroke="#111" stroke-width="1.2" stroke-dasharray="2,1.5"/><circle cx="3" cy="3" r="1.5" fill="#111"/><circle cx="13" cy="3" r="1.5" fill="#111"/><circle cx="3" cy="13" r="1.5" fill="#111"/><circle cx="13" cy="13" r="1.5" fill="#111"/></svg><div class="a" style="left:717px;top:1036px;width:32px;height:20px;background:linear-gradient(#525252,#3c3c3c);border:1px solid #191919;border-radius:5px;"></div><svg class="a" style="left:721px;top:1038px" width="16" height="16" viewBox="0 0 16 16"><circle cx="8" cy="8" r="5" fill="none" stroke="#888" stroke-width="1.5"/><circle cx="8" cy="8" r="2.5" fill="#777"/></svg><svg class="a" style="left:738px;top:1039px" width="8" height="14" viewBox="0 0 8 14"><path d="M4,1 L7.5,5.5 L0.5,5.5Z M4,13 L7.5,8.5 L0.5,8.5Z" fill="#c8c8c8"/></svg><div class="a" style="left:754px;top:1036px;width:72px;height:20px;background:linear-gradient(#a0a0a0,#888);border:1px solid #191919;border-radius:5px;"></div><div class="a" style="left:773px;top:1037px;width:33px;height:18px;background:linear-gradient(#525252,#3c3c3c);"></div><div class="a" style="left:773px;top:1036px;width:1px;height:20px;background:#191919;"></div><div class="a" style="left:806px;top:1036px;width:1px;height:20px;background:#191919;"></div><svg class="a" style="left:756px;top:1038px" width="16" height="16" viewBox="0 0 16 16"><path d="M4,4 V9 A4,4 0 0 0 12,9 V4" stroke="#e8e8e8" stroke-width="3" fill="none"/><path d="M4,4 V9 A4,4 0 0 0 12,9 V4" stroke="#777" stroke-width="1" fill="none"/></svg><svg class="a" style="left:775px;top:1038px" width="20" height="16" viewBox="0 0 20 16"><path d="M2,4 V12 M18,4 V12 M6,6 V10 M14,6 V10 M2,8 H18" stroke="#ddd" stroke-width="1.2"/><circle cx="10" cy="8" r="2.5" fill="#6a9ae0"/></svg><svg class="a" style="left:796px;top:1039px" width="8" height="14" viewBox="0 0 8 14"><path d="M4,1 L7.5,5.5 L0.5,5.5Z M4,13 L7.5,8.5 L0.5,8.5Z" fill="#c8c8c8"/></svg><svg class="a" style="left:808px;top:1038px" width="16" height="16" viewBox="0 0 16 16"><path d="M2,6 H14 M2,10 H14 M6,2 V14 M10,2 V14" stroke="#111" stroke-width="1"/><circle cx="6" cy="6" r="3" fill="#5a8ae0" stroke="#fff" stroke-width="1"/></svg><div class="a" style="left:831px;top:1036px;width:20px;height:20px;background:linear-gradient(#a0a0a0,#888);border:1px solid #191919;border-radius:5px;"></div><svg class="a" style="left:833px;top:1038px" width="16" height="16" viewBox="0 0 16 16"><path d="M3,13 L8,8 M13,3 L8,8" stroke="#eee" stroke-width="2"/><path d="M2,10 L6,14 M10,2 L14,6" stroke="#e0a040" stroke-width="1.5"/></svg><div class="a" style="left:856px;top:1036px;width:40px;height:20px;background:linear-gradient(#a0a0a0,#888);border:1px solid #191919;border-radius:5px;"></div><div class="a" style="left:876px;top:1036px;width:1px;height:20px;background:#191919;"></div><svg class="a" style="left:858px;top:1038px" width="16" height="16" viewBox="0 0 16 16"><rect x="1.5" y="4" width="13" height="9" fill="#ddd" stroke="#111" stroke-width="0.8"/><circle cx="8" cy="8.5" r="3" fill="#333" stroke="#c33" stroke-width="1"/><path d="M13,1 L14,3 L16,3.5" stroke="#ff0" stroke-width="1"/></svg><svg class="a" style="left:878px;top:1038px" width="16" height="16" viewBox="0 0 16 16"><rect x="2" y="6" width="12" height="8" fill="#333" stroke="#ddd" stroke-width="0.8"/><path d="M2,5 L13,1.5 L14,4 L3,7.5Z" fill="#ddd" stroke="#111" stroke-width="0.5"/></svg><div class="a" style="left:1729px;top:109px;width:1px;height:950px;background:#000;"></div><div class="a" style="left:1730px;top:109px;width:255px;height:164px;background:#727272;"></div><div class="a" style="left:1730px;top:109px;width:255px;height:25px;background:linear-gradient(#777777,#6c6c6c);"></div><div class="a" style="left:1730px;top:109px;width:255px;height:1px;background:#858585;"></div><div class="a" style="left:1730px;top:133px;width:255px;height:1px;background:#5e5e5e;"></div><div class="a" style="left:1739px;top:112px;width:32px;height:20px;background:linear-gradient(#525252,#3c3c3c);border:1px solid #191919;border-radius:5px;"></div><svg class="a" style="left:1743px;top:114px" width="16" height="16" viewBox="0 0 16 16"><rect x="1" y="1" width="6" height="2" fill="#f0a030"/><path d="M3,3 V14 M3,8 H6 M3,13 H6" stroke="#ddd" stroke-width="1"/><rect x="7" y="7" width="7" height="2" fill="#eee"/><rect x="7" y="12" width="7" height="2" fill="#eee"/></svg><svg class="a" style="left:1760px;top:115px" width="8" height="14" viewBox="0 0 8 14"><path d="M4,1 L7.5,5.5 L0.5,5.5Z M4,13 L7.5,8.5 L0.5,8.5Z" fill="#c8c8c8"/></svg><div class="t" style="left:1783px;top:117px;color:#000;font-size:11px;">View</div><div class="t" style="left:1828px;top:117px;color:#000;font-size:11px;">Search</div><div class="a" style="left:1876px;top:112px;width:109px;height:20px;background:linear-gradient(#525252,#3c3c3c);border:1px solid #191919;border-right:none;border-radius:5px 0 0 5px"></div><div class="t" style="left:1883px;top:117px;color:#fff;font-size:11px;">All Scenes</div><svg class="a" style="left:1973px;top:110px" width="12" height="12" viewBox="0 0 12 12"><path d="M0.5,0 L11.5,11 M4.5,0 L11.5,7 M8.5,0 L11.5,3" stroke="#000" stroke-width="1.2"/><path d="M0,1 L11,12 M4,1 L11,8 M8,1 L11,4" stroke="#c8c8c8" stroke-width="0.9"/></svg><div class="a" style="left:1730px;top:134px;width:255px;height:20px;background:#878d97;"></div><div class="a" style="left:1730px;top:154px;width:255px;height:20px;background:#777777;"></div><div class="a" style="left:1730px;top:174px;width:255px;height:20px;background:#727272;"></div><div class="a" style="left:1730px;top:194px;width:255px;height:20px;background:#777777;"></div><div class="a" style="left:1730px;top:214px;width:255px;height:20px;background:#727272;"></div><div class="a" style="left:1730px;top:234px;width:255px;height:20px;background:#777777;"></div><div class="a" style="left:1730px;top:134px;width:179px;height:20px;background:#878d97;"></div><div class="a" style="left:1909px;top:134px;width:76px;height:20px;background:#777777;"></div><div class="a" style="left:1730px;top:254px;width:255px;height:19px;background:#727272;"></div><div class="a" style="left:1909px;top:134px;width:1px;height:120px;background:#666;"></div><div class="a" style="left:1929px;top:134px;width:1px;height:120px;background:#666;"></div><div class="a" style="left:1949px;top:134px;width:1px;height:120px;background:#666;"></div><div class="a" style="left:1760px;top:150px;width:1px;height:96px;background:#2a2a2a;"></div><div class="a" style="left:1761px;top:164px;width:8px;height:1px;background:#2a2a2a;"></div><div class="a" style="left:1761px;top:204px;width:8px;height:1px;background:#2a2a2a;"></div><div class="a" style="left:1761px;top:224px;width:8px;height:1px;background:#2a2a2a;"></div><div class="a" style="left:1761px;top:244px;width:8px;height:1px;background:#2a2a2a;"></div><svg class="a" style="left:1735px;top:138px" width="12" height="12" viewBox="0 0 12 12"><circle cx="6" cy="6" r="4.6" fill="#ddd" stroke="#111" stroke-width="1.1"/><path d="M3.5,6 H8.5" stroke="#111" stroke-width="1.2"/></svg><div class="a" style="left:1746px;top:144px;width:8px;height:1px;background:#2a2a2a;"></div><svg class="a" style="left:1755px;top:158px" width="12" height="12" viewBox="0 0 12 12"><circle cx="6" cy="6" r="4.6" fill="#ddd" stroke="#111" stroke-width="1.1"/><path d="M3.5,6 H8.5 M6,3.5 V8.5" stroke="#111" stroke-width="1.2"/></svg><svg class="a" style="left:1755px;top:198px" width="12" height="12" viewBox="0 0 12 12"><circle cx="6" cy="6" r="4.6" fill="#ddd" stroke="#111" stroke-width="1.1"/><path d="M3.5,6 H8.5 M6,3.5 V8.5" stroke="#111" stroke-width="1.2"/></svg><svg class="a" style="left:1755px;top:218px" width="12" height="12" viewBox="0 0 12 12"><circle cx="6" cy="6" r="4.6" fill="#ddd" stroke="#111" stroke-width="1.1"/><path d="M3.5,6 H8.5 M6,3.5 V8.5" stroke="#111" stroke-width="1.2"/></svg><svg class="a" style="left:1755px;top:238px" width="12" height="12" viewBox="0 0 12 12"><circle cx="6" cy="6" r="4.6" fill="#ddd" stroke="#111" stroke-width="1.1"/><path d="M3.5,6 H8.5 M6,3.5 V8.5" stroke="#111" stroke-width="1.2"/></svg><svg class="a" style="left:1752px;top:136px" width="18" height="18" viewBox="0 0 18 18"><circle cx="9" cy="9" r="8" fill="#8a95a8" opacity="0.5"/><circle cx="4" cy="3.5" r="1.6" fill="#e8e890"/><rect x="9" y="3" width="5" height="9" rx="2.5" fill="#6f8fd8" stroke="#223" stroke-width="0.6"/><circle cx="7" cy="12" r="3.4" fill="#ddd" stroke="#222" stroke-width="0.6"/></svg><div class="t" style="left:1773px;top:139px;color:#000;font-size:11px;">Scene</div><svg class="a" style="left:1772px;top:156px" width="16" height="16" viewBox="0 0 16 16"><rect x="3" y="3" width="11" height="11" fill="#ccc" stroke="#222" stroke-width="0.7"/><rect x="1" y="1" width="11" height="11" fill="#fff" stroke="#222" stroke-width="0.7"/><path d="M6,3 V9 M6,3 L9,4" stroke="#3a5ac0" stroke-width="1.5"/></svg><div class="t" style="left:1793px;top:159px;color:#000;font-size:11px;">RenderLayers</div><div class="a" style="left:1871px;top:159px;width:2px;height:10px;background:#3c3c3c;"></div><svg class="a" style="left:1882px;top:156px" width="16" height="16" viewBox="0 0 16 16"><circle cx="8" cy="8" r="7.5" fill="#888" opacity="0.4"/><rect x="4" y="4" width="10" height="10" fill="#ccc" stroke="#222" stroke-width="0.7"/><rect x="2" y="2" width="10" height="10" fill="#fff" stroke="#222" stroke-width="0.7"/><path d="M6,4 V9 M6,4 L9,5" stroke="#3a5ac0" stroke-width="1.5"/></svg><svg class="a" style="left:1772px;top:176px" width="16" height="16" viewBox="0 0 16 16"><circle cx="8" cy="8" r="7.5" fill="#8f9ab8" opacity="0.6"/><circle cx="8" cy="8" r="6" fill="#3e7ac8" stroke="#222" stroke-width="0.7"/><path d="M4,6 Q7,4 8,7 Q10,10 12,8 M5,10 Q7,12 9,11" stroke="#4ea04e" stroke-width="2" fill="none"/></svg><div class="t" style="left:1793px;top:179px;color:#000;font-size:11px;">World</div><svg class="a" style="left:1772px;top:196px" width="18" height="16" viewBox="0 0 18 16"><circle cx="5" cy="4" r="3" fill="#e8902a" stroke="#333" stroke-width="0.6"/><circle cx="11" cy="4" r="3" fill="#e8902a" stroke="#333" stroke-width="0.6"/><rect x="2" y="7" width="11" height="5" fill="#e8902a" stroke="#333" stroke-width="0.6"/><path d="M13,9 L17,7 V13 L13,11Z" fill="#e8902a"/></svg><div class="t" style="left:1793px;top:199px;color:#000;font-size:11px;">Camera</div><div class="a" style="left:1842px;top:199px;width:2px;height:10px;background:#3c3c3c;"></div><svg class="a" style="left:1853px;top:196px" width="18" height="18" viewBox="0 0 18 18"><circle cx="9" cy="9" r="8.5" fill="#888" opacity="0.5"/><circle cx="6" cy="6" r="2.6" fill="none" stroke="#aaa" stroke-width="1"/><circle cx="11" cy="6" r="2.6" fill="none" stroke="#aaa" stroke-width="1"/><rect x="4" y="9" width="9" height="4" fill="none" stroke="#aaa" stroke-width="1"/></svg><svg class="a" style="left:1771px;top:215px" width="18" height="18" viewBox="0 0 18 18"><circle cx="9" cy="9" r="8.5" fill="#c98a50" opacity="0.85"/><path d="M3.5,4 L14.5,4 L9,14Z" fill="none" stroke="#fff" stroke-width="1.2"/><path d="M3.5,4 L14.5,4 L9,14Z" fill="none" stroke="#e89030" stroke-width="0.6"/></svg><div class="t" style="left:1793px;top:219px;color:#fff;font-size:11px;">Hull</div><div class="a" style="left:1823px;top:219px;width:2px;height:10px;background:#3c3c3c;"></div><svg class="a" style="left:1834px;top:215px" width="18" height="18" viewBox="0 0 18 18"><circle cx="9" cy="9" r="8.5" fill="#8a8a8a"/><path d="M4,5 L14,5 L9,13Z" fill="none" stroke="#ddd" stroke-width="1"/><circle cx="4" cy="5" r="1.2" fill="#fff"/><circle cx="14" cy="5" r="1.2" fill="#fff"/><circle cx="9" cy="13" r="1.2" fill="#fff"/></svg><svg class="a" style="left:1774px;top:236px" width="14" height="18" viewBox="0 0 14 18"><circle cx="7" cy="6" r="4.5" fill="#f5d090" stroke="#333" stroke-width="0.7"/><rect x="5" y="10" width="4" height="5" fill="#e8a040" stroke="#333" stroke-width="0.6"/></svg><div class="t" style="left:1793px;top:239px;color:#000;font-size:11px;">Lamp</div><div class="a" style="left:1831px;top:239px;width:2px;height:10px;background:#3c3c3c;"></div><svg class="a" style="left:1843px;top:236px" width="16" height="16" viewBox="0 0 16 16"><circle cx="8" cy="8" r="3.5" fill="#c8c890"/><path d="M8,1 V4 M8,12 V15 M1,8 H4 M12,8 H15 M3,3 L5,5 M11,11 L13,13 M13,3 L11,5 M3,13 L5,11" stroke="#a8a870" stroke-width="1.2"/></svg><svg class="a" style="left:1911px;top:198px" width="16" height="12" viewBox="0 0 16 12"><path d="M1,6 Q8,-1 15,6 Q8,13 1,6Z" fill="#fff" stroke="#111" stroke-width="1"/><circle cx="8" cy="6" r="2.4" fill="#222"/></svg><svg class="a" style="left:1933px;top:196px" width="12" height="16" viewBox="0 0 12 16"><path d="M2,1 L2,13 L5,10 L8,15 L10,14 L7,9 L11,9Z" fill="#fff" stroke="#111" stroke-width="1"/></svg><svg class="a" style="left:1951px;top:197px" width="14" height="14" viewBox="0 0 14 14"><rect x="1" y="3" width="12" height="9" fill="#ddd" stroke="#111" stroke-width="1"/><circle cx="7" cy="7.5" r="2.6" fill="#333" stroke="#fff" stroke-width="0.7"/><rect x="2" y="1" width="3" height="2" fill="#111"/></svg><svg class="a" style="left:1911px;top:218px" width="16" height="12" viewBox="0 0 16 12"><path d="M1,6 Q8,-1 15,6 Q8,13 1,6Z" fill="#fff" stroke="#111" stroke-width="1"/><circle cx="8" cy="6" r="2.4" fill="#222"/></svg><svg class="a" style="left:1933px;top:216px" width="12" height="16" viewBox="0 0 12 16"><path d="M2,1 L2,13 L5,10 L8,15 L10,14 L7,9 L11,9Z" fill="#fff" stroke="#111" stroke-width="1"/></svg><svg class="a" style="left:1951px;top:217px" width="14" height="14" viewBox="0 0 14 14"><rect x="1" y="3" width="12" height="9" fill="#ddd" stroke="#111" stroke-width="1"/><circle cx="7" cy="7.5" r="2.6" fill="#333" stroke="#fff" stroke-width="0.7"/><rect x="2" y="1" width="3" height="2" fill="#111"/></svg><svg class="a" style="left:1911px;top:238px" width="16" height="12" viewBox="0 0 16 12"><path d="M1,6 Q8,-1 15,6 Q8,13 1,6Z" fill="#fff" stroke="#111" stroke-width="1"/><circle cx="8" cy="6" r="2.4" fill="#222"/></svg><svg class="a" style="left:1933px;top:236px" width="12" height="16" viewBox="0 0 12 16"><path d="M2,1 L2,13 L5,10 L8,15 L10,14 L7,9 L11,9Z" fill="#fff" stroke="#111" stroke-width="1"/></svg><svg class="a" style="left:1951px;top:237px" width="14" height="14" viewBox="0 0 14 14"><rect x="1" y="3" width="12" height="9" fill="#ddd" stroke="#111" stroke-width="1"/><circle cx="7" cy="7.5" r="2.6" fill="#333" stroke="#fff" stroke-width="0.7"/><rect x="2" y="1" width="3" height="2" fill="#111"/></svg><div class="a" style="left:1734px;top:256px;width:229px;height:12px;background:#5e5e5e;border:1px solid #555;border-radius:6px;"></div><div class="a" style="left:1734px;top:256px;width:181px;height:12px;background:linear-gradient(#9a9a9a,#878787);border:1px solid #666;border-radius:6px;"></div><div class="a" style="left:1968px;top:140px;width:13px;height:111px;background:linear-gradient(90deg,#777,#959595,#777);border:1px solid #555;border-radius:6px;"></div><div class="a" style="left:1730px;top:273px;width:255px;height:1px;background:#000;"></div><div class="a" style="left:1730px;top:109px;width:1px;height:164px;background:#8c8c8c;"></div><div class="a" style="left:1730px;top:274px;width:255px;height:785px;background:#727272;"></div><div class="a" style="left:1730px;top:274px;width:255px;height:25px;background:linear-gradient(#777777,#6c6c6c);"></div><div class="a" style="left:1730px;top:274px;width:255px;height:1px;background:#858585;"></div><div class="a" style="left:1730px;top:297px;width:255px;height:2px;background:#666;"></div><div class="a" style="left:1730px;top:299px;width:255px;height:1px;background:#8a8a8a;"></div><div class="a" style="left:1739px;top:277px;width:32px;height:20px;background:linear-gradient(#525252,#3c3c3c);border:1px solid #191919;border-radius:5px;"></div><svg class="a" style="left:1743px;top:280px" width="16" height="14" viewBox="0 0 16 14"><rect x="1" y="1" width="13" height="5" rx="2" fill="#ddd" stroke="#111" stroke-width="0.8"/><rect x="1" y="1" width="7" height="5" rx="2" fill="#666"/><rect x="1" y="8" width="13" height="5" rx="2" fill="#eee" stroke="#111" stroke-width="0.8"/><path d="M3,10.5 L5,9 V12Z M12,10.5 L10,9 V12Z" fill="#111"/></svg><svg class="a" style="left:1760px;top:280px" width="8" height="14" viewBox="0 0 8 14"><path d="M4,1 L7.5,5.5 L0.5,5.5Z M4,13 L7.5,8.5 L0.5,8.5Z" fill="#c8c8c8"/></svg><div class="a" style="left:1780px;top:277px;width:205px;height:20px;background:linear-gradient(#525252,#3c3c3c);border:1px solid #191919;border-radius:5px 0 0 5px;"></div><div class="a" style="left:1799px;top:278px;width:1px;height:18px;background:#2a2a2a;"></div><div class="a" style="left:1819px;top:278px;width:1px;height:18px;background:#2a2a2a;"></div><div class="a" style="left:1838px;top:278px;width:1px;height:18px;background:#2a2a2a;"></div><div class="a" style="left:1858px;top:278px;width:1px;height:18px;background:#2a2a2a;"></div><div class="a" style="left:1878px;top:278px;width:1px;height:18px;background:#2a2a2a;"></div><div class="a" style="left:1898px;top:278px;width:1px;height:18px;background:#2a2a2a;"></div><div class="a" style="left:1918px;top:278px;width:1px;height:18px;background:#2a2a2a;"></div><div class="a" style="left:1938px;top:278px;width:1px;height:18px;background:#2a2a2a;"></div><div class="a" style="left:1958px;top:278px;width:1px;height:18px;background:#2a2a2a;"></div><div class="a" style="left:1978px;top:278px;width:1px;height:18px;background:#2a2a2a;"></div><div class="a" style="left:1780px;top:277px;width:20px;height:20px;background:linear-gradient(#5a6a88,#4a5a78);border:1px solid #191919;border-radius:5px 0 0 5px;"></div><div class="a" style="left:1781px;top:278px;width:18px;height:18px;background:#505050;border:2px solid #5a7ec0;border-radius:4px 0 0 4px"></div><svg class="a" style="left:1782px;top:279px" width="16" height="16" viewBox="0 0 16 16"><rect x="2" y="5" width="12" height="9" fill="#ddd" stroke="#111" stroke-width="0.8"/><rect x="3" y="3" width="4" height="2" fill="#ddd" stroke="#111" stroke-width="0.5"/><circle cx="9" cy="9.5" r="3" fill="#333" stroke="#c44" stroke-width="1"/></svg><svg class="a" style="left:1801px;top:279px" width="16" height="16" viewBox="0 0 16 16"><rect x="4" y="4" width="10" height="10" fill="#bbb" stroke="#222" stroke-width="0.6"/><rect x="2" y="2" width="10" height="10" fill="#ddd" stroke="#222" stroke-width="0.6"/><path d="M6,4 V9 M6,4 L9,5" stroke="#3a5ac0" stroke-width="1.4"/></svg><svg class="a" style="left:1821px;top:279px" width="16" height="16" viewBox="0 0 16 16"><circle cx="4" cy="3.5" r="2" fill="#c8c890" opacity="0.6"/><rect x="9" y="3" width="4.5" height="8" rx="2.2" fill="#7890b8"/><circle cx="6.5" cy="11" r="3.3" fill="#aaa"/></svg><svg class="a" style="left:1840px;top:279px" width="16" height="16" viewBox="0 0 16 16"><circle cx="8" cy="8" r="6" fill="#7a8a98" stroke="#333" stroke-width="0.6"/><path d="M5,5 Q8,3 10,6 Q9,9 11,11 M4,9 Q6,12 8,11" stroke="#4a6aa8" stroke-width="2" fill="none"/></svg><svg class="a" style="left:1860px;top:279px" width="16" height="16" viewBox="0 0 16 16"><path d="M3,5 L8,2.5 L13,5 L13,11 L8,13.5 L3,11Z" fill="#c89858" stroke="#222" stroke-width="0.6"/><path d="M3,5 L8,7.5 L13,5 M8,7.5 V13.5" stroke="#6a4a2a" stroke-width="0.6" fill="none"/></svg><svg class="a" style="left:1880px;top:279px" width="16" height="16" viewBox="0 0 16 16"><rect x="2" y="6" width="7" height="5" rx="2.5" transform="rotate(-40 5.5 8.5)" fill="none" stroke="#bbb" stroke-width="1.5"/><rect x="7" y="5" width="7" height="5" rx="2.5" transform="rotate(-40 10.5 7.5)" fill="none" stroke="#bbb" stroke-width="1.5"/></svg><svg class="a" style="left:1900px;top:279px" width="16" height="16" viewBox="0 0 16 16"><path d="M3,13 L10,6" stroke="#7890b8" stroke-width="2.4"/><path d="M9,4 A3,3 0 1 0 13,8" fill="none" stroke="#7890b8" stroke-width="2"/></svg><svg class="a" style="left:1920px;top:279px" width="16" height="16" viewBox="0 0 16 16"><path d="M3,3 L13,3 L8,13Z" fill="none" stroke="#ddd" stroke-width="1"/><circle cx="3" cy="3" r="1.3" fill="#fff"/><circle cx="13" cy="3" r="1.3" fill="#fff"/><circle cx="8" cy="13" r="1.3" fill="#fff"/></svg><svg class="a" style="left:1940px;top:279px" width="16" height="16" viewBox="0 0 16 16"><circle cx="8" cy="8" r="5.8" fill="#8a8080" stroke="#333" stroke-width="0.6"/><path d="M8,2.2 A5.8,5.8 0 0 1 13.8,8 L8,8Z M8,8 L2.2,8 A5.8,5.8 0 0 0 8,13.8Z" fill="#b8b0b0"/></svg><svg class="a" style="left:1960px;top:279px" width="16" height="16" viewBox="0 0 16 16"><rect x="2" y="2" width="12" height="12" fill="#cbbcb4"/><path d="M2,2 h3v3h-3z M8,2 h3v3h-3z M5,5 h3v3h-3z M11,5 h3v3h-3z M2,8 h3v3h-3z M8,8 h3v3h-3z M5,11 h3v3h-3z M11,11 h3v3h-3z" fill="#6a2a2a"/></svg><svg class="a" style="left:1980px;top:279px" width="16" height="16" viewBox="0 0 16 16"><path d="M3,10 L8,5" stroke="#bbb" stroke-width="1.6"/></svg><svg class="a" style="left:1973px;top:276px" width="12" height="12" viewBox="0 0 12 12"><path d="M0.5,0 L11.5,11 M4.5,0 L11.5,7 M8.5,0 L11.5,3" stroke="#000" stroke-width="1.2"/><path d="M0,1 L11,12 M4,1 L11,8 M8,1 L11,4" stroke="#c8c8c8" stroke-width="0.9"/></svg><svg class="a" style="left:1730px;top:262px" width="12" height="12" viewBox="0 0 12 12"><path d="M0,3 L9,12 M0,7 L5,12 M0,11 L1,12" stroke="#000" stroke-width="1.3"/><path d="M0,4.5 L7.5,12 M0,8.5 L3.5,12" stroke="#a0a0a0" stroke-width="1"/></svg><svg class="a" style="left:1740px;top:310px" width="16" height="16" viewBox="0 0 16 16"><path d="M2,14 L7,9" stroke="#eee" stroke-width="1.4"/><path d="M5,7 L9,11 L12,8 L8,4Z" fill="#eee" stroke="#333" stroke-width="0.6"/><path d="M8,3 L13,8" stroke="#eee" stroke-width="2.4"/></svg><svg class="a" style="left:1760px;top:309px" width="16" height="16" viewBox="0 0 16 16"><circle cx="4" cy="3.5" r="1.8" fill="#e8e890" opacity="0.8"/><rect x="9" y="3" width="5" height="9" rx="2.5" fill="#6f8fd8" stroke="#223" stroke-width="0.6"/><circle cx="6.5" cy="11.5" r="3.5" fill="#ddd" stroke="#222" stroke-width="0.6"/></svg><div class="t" style="left:1781px;top:313px;color:#000;font-size:11px;">Scene</div><div class="a" style="left:1735px;top:335px;width:228px;height:1px;background:#4a4a4a;"></div><div class="a" style="left:1735px;top:336px;width:228px;height:1px;background:#8a8a8a;"></div><svg class="a" style="left:1742px;top:343px" width="10" height="10" viewBox="0 0 10 10"><path d="M1,2 L9,2 L5,8Z" fill="#111"/></svg><div class="t" style="left:1755px;top:341px;color:#000;font-size:12.4px;line-height:14px">Render</div><svg class="a" style="left:1945px;top:345px" width="14" height="6" viewBox="0 0 14 6"><rect x="1" y="0" width="1.2" height="1.2" fill="#a8a8a8"/><rect x="1" y="3" width="1.2" height="1.2" fill="#a8a8a8"/><rect x="4" y="0" width="1.2" height="1.2" fill="#a8a8a8"/><rect x="4" y="3" width="1.2" height="1.2" fill="#a8a8a8"/><rect x="7" y="0" width="1.2" height="1.2" fill="#a8a8a8"/><rect x="7" y="3" width="1.2" height="1.2" fill="#a8a8a8"/><rect x="10" y="0" width="1.2" height="1.2" fill="#a8a8a8"/><rect x="10" y="3" width="1.2" height="1.2" fill="#a8a8a8"/></svg><div class="a" style="left:1738px;top:369px;width:222px;height:19px;background:linear-gradient(#a6a6a6,#8e8e8e);border:1px solid #191919;border-radius:5px;"></div><div class="a" style="left:1811px;top:369px;width:1px;height:19px;background:#2a2a2a;"></div><div class="a" style="left:1885px;top:369px;width:1px;height:19px;background:#2a2a2a;"></div><svg class="a" style="left:1741px;top:370px" width="16" height="16" viewBox="0 0 16 16"><rect x="1" y="5" width="13" height="9" fill="#ddd" stroke="#111" stroke-width="0.8"/><circle cx="7.5" cy="9.5" r="3" fill="#333" stroke="#c44" stroke-width="1"/><path d="M12,1 L13,3.5 L15.5,4" stroke="#ff3" stroke-width="1.2"/></svg><div class="t" style="left:1765px;top:373px;color:#000;font-size:11px;">Render</div><svg class="a" style="left:1814px;top:370px" width="18" height="16" viewBox="0 0 18 16"><rect x="2" y="7" width="13" height="8" fill="#333" stroke="#ddd" stroke-width="0.8"/><path d="M2,6 L14,2 L15,4.5 L3,8.5Z" fill="#ddd" stroke="#111" stroke-width="0.5"/></svg><div class="t" style="left:1831px;top:373px;color:#000;font-size:11px;">Animation</div><svg class="a" style="left:1888px;top:370px" width="20" height="16" viewBox="0 0 20 16"><path d="M2,6 H5 L9,2 V14 L5,10 H2Z" fill="#ddd" stroke="#111" stroke-width="0.7"/><path d="M11,5 Q13,8 11,11 M13,3 Q16,8 13,13" stroke="#6a8ad0" stroke-width="1.2" fill="none"/></svg><div class="t" style="left:1915px;top:373px;color:#000;font-size:11px;">Audio</div><div class="t" style="left:1745px;top:398px;color:#000;font-size:11px;">Display:</div><div class="a" style="left:1816px;top:394px;width:124px;height:19px;background:linear-gradient(#525252,#3c3c3c);border:1px solid #191919;border-radius:5px 0 0 5px;"></div><div class="t" style="left:1823px;top:398px;color:#fff;font-size:11px;">Image Editor</div><svg class="a" style="left:1929px;top:396px" width="8" height="14" viewBox="0 0 8 14"><path d="M4,1 L7.5,5.5 L0.5,5.5Z M4,13 L7.5,8.5 L0.5,8.5Z" fill="#c8c8c8"/></svg><div class="a" style="left:1939px;top:394px;width:21px;height:19px;background:linear-gradient(#a6a6a6,#8e8e8e);border:1px solid #191919;border-radius:0 5px 5px 0;"></div><svg class="a" style="left:1941px;top:396px" width="16" height="16" viewBox="0 0 16 16"><path d="M4,7 V4.5 A2.5,2.5 0 0 1 9,4.5" stroke="#eee" stroke-width="1.5" fill="none"/><rect x="5" y="7" width="9" height="7" fill="#eee" stroke="#222" stroke-width="0.7"/></svg><div class="a" style="left:1735px;top:420px;width:228px;height:1px;background:#4a4a4a;"></div><div class="a" style="left:1735px;top:421px;width:228px;height:1px;background:#8a8a8a;"></div><svg class="a" style="left:1742px;top:428px" width="10" height="10" viewBox="0 0 10 10"><path d="M1,2 L9,2 L5,8Z" fill="#111"/></svg><div class="t" style="left:1755px;top:426px;color:#000;font-size:12.4px;line-height:14px">Dimensions</div><svg class="a" style="left:1945px;top:430px" width="14" height="6" viewBox="0 0 14 6"><rect x="1" y="0" width="1.2" height="1.2" fill="#a8a8a8"/><rect x="1" y="3" width="1.2" height="1.2" fill="#a8a8a8"/><rect x="4" y="0" width="1.2" height="1.2" fill="#a8a8a8"/><rect x="4" y="3" width="1.2" height="1.2" fill="#a8a8a8"/><rect x="7" y="0" width="1.2" height="1.2" fill="#a8a8a8"/><rect x="7" y="3" width="1.2" height="1.2" fill="#a8a8a8"/><rect x="10" y="0" width="1.2" height="1.2" fill="#a8a8a8"/><rect x="10" y="3" width="1.2" height="1.2" fill="#a8a8a8"/></svg><div class="a" style="left:1738px;top:453px;width:182px;height:20px;background:linear-gradient(#525252,#3c3c3c);border:1px solid #191919;border-radius:5px 0 0 5px;"></div><div class="t" style="left:1745px;top:458px;color:#fff;font-size:11px;">Render Presets</div><svg class="a" style="left:1909px;top:456px" width="8" height="14" viewBox="0 0 8 14"><path d="M4,1 L7.5,5.5 L0.5,5.5Z M4,13 L7.5,8.5 L0.5,8.5Z" fill="#c8c8c8"/></svg><div class="a" style="left:1919px;top:453px;width:41px;height:20px;background:linear-gradient(#a6a6a6,#8e8e8e);border:1px solid #191919;border-radius:0 5px 5px 0;"></div><div class="a" style="left:1939px;top:453px;width:1px;height:20px;background:#2a2a2a;"></div><svg class="a" style="left:1922px;top:456px" width="14" height="14" viewBox="0 0 14 14"><path d="M7,2 V12 M2,7 H12" stroke="#111" stroke-width="3.4"/><path d="M7,2.6 V11.4 M2.6,7 H11.4" stroke="#fff" stroke-width="1.6"/></svg><svg class="a" style="left:1942px;top:456px" width="14" height="14" viewBox="0 0 14 14"><path d="M2,7 H12" stroke="#111" stroke-width="3.4"/><path d="M2.6,7 H11.4" stroke="#fff" stroke-width="1.6"/></svg><div class="t" style="left:1745px;top:484px;color:#000;font-size:11px;">Resolution:</div><div class="t" style="left:1861px;top:484px;color:#000;font-size:11px;">Frame Range:</div><div class="a" style="left:1738px;top:499px;width:107px;height:59px;background:linear-gradient(#a9a9a9,#b9b9b9);border:1px solid #3a3a3a;border-radius:8px;"></div><div class="a" style="left:1739px;top:517px;width:105px;height:1px;background:#3a3a3a;"></div><div class="a" style="left:1739px;top:537px;width:105px;height:1px;background:#3a3a3a;"></div><div class="a" style="left:1739px;top:538px;width:56px;height:19px;background:linear-gradient(#7e7e7e,#8a8a8a);border-radius:0 0 0 7px"></div><svg class="a" style="left:1743px;top:504px" width="6" height="8" viewBox="0 0 6 8"><path d="M5,0.5 L1,4 L5,7.5Z" fill="#5a5a5a"/></svg><svg class="a" style="left:1834px;top:504px" width="6" height="8" viewBox="0 0 6 8"><path d="M1,0.5 L5,4 L1,7.5Z" fill="#5a5a5a"/></svg><div class="t" style="left:1752px;top:503px;color:#000;font-size:11px;">X:</div><div class="t" style="left:1529px;top:503px;width:300px;text-align:right;color:#000;font-size:11px;">1920 px</div><svg class="a" style="left:1743px;top:523px" width="6" height="8" viewBox="0 0 6 8"><path d="M5,0.5 L1,4 L5,7.5Z" fill="#5a5a5a"/></svg><svg class="a" style="left:1834px;top:523px" width="6" height="8" viewBox="0 0 6 8"><path d="M1,0.5 L5,4 L1,7.5Z" fill="#5a5a5a"/></svg><div class="t" style="left:1752px;top:522px;color:#000;font-size:11px;">Y:</div><div class="t" style="left:1529px;top:522px;width:300px;text-align:right;color:#000;font-size:11px;">1080 px</div><div class="t" style="left:1530px;top:542px;width:300px;text-align:right;color:#000;font-size:11px;">50%</div><div class="a" style="left:1853px;top:499px;width:107px;height:59px;background:linear-gradient(#a9a9a9,#b9b9b9);border:1px solid #3a3a3a;border-radius:8px;"></div><div class="a" style="left:1854px;top:517px;width:105px;height:1px;background:#3a3a3a;"></div><div class="a" style="left:1854px;top:537px;width:105px;height:1px;background:#3a3a3a;"></div><svg class="a" style="left:1858px;top:504px" width="6" height="8" viewBox="0 0 6 8"><path d="M5,0.5 L1,4 L5,7.5Z" fill="#5a5a5a"/></svg><svg class="a" style="left:1949px;top:504px" width="6" height="8" viewBox="0 0 6 8"><path d="M1,0.5 L5,4 L1,7.5Z" fill="#5a5a5a"/></svg><div class="t" style="left:1869px;top:503px;color:#000;font-size:11px;">Start Frame:</div><div class="t" style="left:1644px;top:503px;width:300px;text-align:right;color:#000;font-size:11px;">1</div><svg class="a" style="left:1858px;top:523px" width="6" height="8" viewBox="0 0 6 8"><path d="M5,0.5 L1,4 L5,7.5Z" fill="#5a5a5a"/></svg><svg class="a" style="left:1949px;top:523px" width="6" height="8" viewBox="0 0 6 8"><path d="M1,0.5 L5,4 L1,7.5Z" fill="#5a5a5a"/></svg><div class="t" style="left:1869px;top:522px;color:#000;font-size:11px;">End Fram:</div><div class="t" style="left:1644px;top:522px;width:300px;text-align:right;color:#000;font-size:11px;">250</div><svg class="a" style="left:1858px;top:543px" width="6" height="8" viewBox="0 0 6 8"><path d="M5,0.5 L1,4 L5,7.5Z" fill="#5a5a5a"/></svg><svg class="a" style="left:1949px;top:543px" width="6" height="8" viewBox="0 0 6 8"><path d="M1,0.5 L5,4 L1,7.5Z" fill="#5a5a5a"/></svg><div class="t" style="left:1869px;top:542px;color:#000;font-size:11px;">Frame Step:</div><div class="t" style="left:1644px;top:542px;width:300px;text-align:right;color:#000;font-size:11px;">1</div><div class="t" style="left:1745px;top:563px;color:#000;font-size:11px;">Aspect Ratio:</div><div class="t" style="left:1861px;top:563px;color:#000;font-size:11px;">Frame Rate:</div><div class="a" style="left:1738px;top:579px;width:107px;height:39px;background:linear-gradient(#a9a9a9,#b9b9b9);border:1px solid #3a3a3a;border-radius:8px;"></div><div class="a" style="left:1739px;top:597px;width:105px;height:1px;background:#3a3a3a;"></div><svg class="a" style="left:1743px;top:584px" width="6" height="8" viewBox="0 0 6 8"><path d="M5,0.5 L1,4 L5,7.5Z" fill="#5a5a5a"/></svg><svg class="a" style="left:1834px;top:584px" width="6" height="8" viewBox="0 0 6 8"><path d="M1,0.5 L5,4 L1,7.5Z" fill="#5a5a5a"/></svg><div class="t" style="left:1752px;top:583px;color:#000;font-size:11px;">X:</div><div class="t" style="left:1529px;top:583px;width:300px;text-align:right;color:#000;font-size:11px;">1.000</div><svg class="a" style="left:1743px;top:603px" width="6" height="8" viewBox="0 0 6 8"><path d="M5,0.5 L1,4 L5,7.5Z" fill="#5a5a5a"/></svg><svg class="a" style="left:1834px;top:603px" width="6" height="8" viewBox="0 0 6 8"><path d="M1,0.5 L5,4 L1,7.5Z" fill="#5a5a5a"/></svg><div class="t" style="left:1752px;top:602px;color:#000;font-size:11px;">Y:</div><div class="t" style="left:1529px;top:602px;width:300px;text-align:right;color:#000;font-size:11px;">1.000</div><div class="a" style="left:1853px;top:579px;width:107px;height:19px;background:linear-gradient(#525252,#3c3c3c);border:1px solid #191919;border-radius:5px;"></div><div class="t" style="left:1861px;top:583px;color:#fff;font-size:11px;">24 fps</div><svg class="a" style="left:1949px;top:581px" width="8" height="14" viewBox="0 0 8 14"><path d="M4,1 L7.5,5.5 L0.5,5.5Z M4,13 L7.5,8.5 L0.5,8.5Z" fill="#c8c8c8"/></svg><div class="t" style="left:1861px;top:604px;color:#000;font-size:11px;">Time Remapping:</div><div class="a" style="left:1853px;top:619px;width:107px;height:19px;background:linear-gradient(#a9a9a9,#b9b9b9);border:1px solid #3a3a3a;border-radius:8px;"></div><div class="a" style="left:1905px;top:619px;width:1px;height:19px;background:#3a3a3a;"></div><svg class="a" style="left:1858px;top:624px" width="6" height="8" viewBox="0 0 6 8"><path d="M5,0.5 L1,4 L5,7.5Z" fill="#5a5a5a"/></svg><svg class="a" style="left:1895px;top:624px" width="6" height="8" viewBox="0 0 6 8"><path d="M1,0.5 L5,4 L1,7.5Z" fill="#5a5a5a"/></svg><svg class="a" style="left:1910px;top:624px" width="6" height="8" viewBox="0 0 6 8"><path d="M5,0.5 L1,4 L5,7.5Z" fill="#5a5a5a"/></svg><svg class="a" style="left:1949px;top:624px" width="6" height="8" viewBox="0 0 6 8"><path d="M1,0.5 L5,4 L1,7.5Z" fill="#5a5a5a"/></svg><div class="t" style="left:1869px;top:623px;color:#000;font-size:11px;">100</div><div class="t" style="left:1922px;top:623px;color:#000;font-size:11px;">100</div><div class="a" style="left:1741px;top:623px;width:14px;height:14px;background:linear-gradient(#525252,#3c3c3c);border:1px solid #191919;border-radius:3px;"></div><div class="t" style="left:1763px;top:625px;color:#000;font-size:11px;">Bord</div><div class="a" style="left:1798px;top:623px;width:14px;height:14px;background:linear-gradient(#5e5e5e,#4c4c4c);border:1px solid #444;border-radius:3px;"></div><div class="t" style="left:1819px;top:625px;color:#4e4e4e;font-size:11px;">Crop</div><div class="a" style="left:1735px;top:647px;width:228px;height:1px;background:#4a4a4a;"></div><div class="a" style="left:1735px;top:648px;width:228px;height:1px;background:#8a8a8a;"></div><svg class="a" style="left:1742px;top:655px" width="10" height="10" viewBox="0 0 10 10"><path d="M1,2 L9,2 L5,8Z" fill="#111"/></svg><div class="a" style="left:1755px;top:653px;width:14px;height:14px;background:linear-gradient(#525252,#3c3c3c);border:1px solid #191919;border-radius:3px;"></div><svg class="a" style="left:1756px;top:652px" width="14" height="14" viewBox="0 0 14 14"><path d="M2.5,7 L5.5,10.5 L11.5,2.5" stroke="#fff" stroke-width="2" fill="none"/></svg><div class="t" style="left:1775px;top:654px;color:#000;font-size:12.4px;line-height:14px">Anti-Aliasing</div><svg class="a" style="left:1945px;top:658px" width="14" height="6" viewBox="0 0 14 6"><rect x="1" y="0" width="1.2" height="1.2" fill="#a8a8a8"/><rect x="1" y="3" width="1.2" height="1.2" fill="#a8a8a8"/><rect x="4" y="0" width="1.2" height="1.2" fill="#a8a8a8"/><rect x="4" y="3" width="1.2" height="1.2" fill="#a8a8a8"/><rect x="7" y="0" width="1.2" height="1.2" fill="#a8a8a8"/><rect x="7" y="3" width="1.2" height="1.2" fill="#a8a8a8"/><rect x="10" y="0" width="1.2" height="1.2" fill="#a8a8a8"/><rect x="10" y="3" width="1.2" height="1.2" fill="#a8a8a8"/></svg><div class="a" style="left:1738px;top:681px;width:107px;height:19px;background:linear-gradient(#525252,#3c3c3c);border:1px solid #191919;border-radius:5px;"></div><div class="a" style="left:1764px;top:682px;width:26px;height:17px;background:linear-gradient(#6a93d3,#4f78b8);"></div><div class="a" style="left:1763px;top:681px;width:1px;height:19px;background:#191919;"></div><div class="a" style="left:1790px;top:681px;width:1px;height:19px;background:#191919;"></div><div class="a" style="left:1817px;top:681px;width:1px;height:19px;background:#191919;"></div><div class="t" style="left:1738px;top:685px;width:26px;text-align:center;color:#fff;font-size:11px;">5</div><div class="t" style="left:1764px;top:685px;width:26px;text-align:center;color:#000;font-size:11px;">8</div><div class="t" style="left:1790px;top:685px;width:27px;text-align:center;color:#fff;font-size:11px;">11</div><div class="t" style="left:1817px;top:685px;width:28px;text-align:center;color:#fff;font-size:11px;">16</div><div class="a" style="left:1853px;top:681px;width:107px;height:19px;background:linear-gradient(#525252,#3c3c3c);border:1px solid #191919;border-radius:5px;"></div><div class="t" style="left:1861px;top:685px;color:#fff;font-size:11px;">Mitchell-Netrav...</div><svg class="a" style="left:1949px;top:683px" width="8" height="14" viewBox="0 0 8 14"><path d="M4,1 L7.5,5.5 L0.5,5.5Z M4,13 L7.5,8.5 L0.5,8.5Z" fill="#c8c8c8"/></svg><div class="a" style="left:1741px;top:705px;width:14px;height:14px;background:linear-gradient(#525252,#3c3c3c);border:1px solid #191919;border-radius:3px;"></div><div class="t" style="left:1762px;top:707px;color:#000;font-size:11px;">Full Sample</div><div class="a" style="left:1853px;top:703px;width:107px;height:19px;background:linear-gradient(#a9a9a9,#b9b9b9);border:1px solid #3a3a3a;border-radius:9px;"></div><svg class="a" style="left:1858px;top:708px" width="6" height="8" viewBox="0 0 6 8"><path d="M5,0.5 L1,4 L5,7.5Z" fill="#5a5a5a"/></svg><svg class="a" style="left:1949px;top:708px" width="6" height="8" viewBox="0 0 6 8"><path d="M1,0.5 L5,4 L1,7.5Z" fill="#5a5a5a"/></svg><div class="t" style="left:1869px;top:707px;color:#000;font-size:11px;">Size:</div><div class="t" style="left:1644px;top:707px;width:300px;text-align:right;color:#000;font-size:11px;">1.000 px</div><div class="a" style="left:1735px;top:729px;width:228px;height:1px;background:#4a4a4a;"></div><div class="a" style="left:1735px;top:730px;width:228px;height:1px;background:#8a8a8a;"></div><svg class="a" style="left:1742px;top:737px" width="10" height="10" viewBox="0 0 10 10"><path d="M2,1 L8,5 L2,9Z" fill="#222"/></svg><div class="a" style="left:1755px;top:735px;width:14px;height:14px;background:linear-gradient(#525252,#3c3c3c);border:1px solid #191919;border-radius:3px;"></div><div class="t" style="left:1775px;top:735px;color:#000;font-size:12.4px;line-height:14px">Sampled Motion Blur</div><svg class="a" style="left:1945px;top:739px" width="14" height="6" viewBox="0 0 14 6"><rect x="1" y="0" width="1.2" height="1.2" fill="#a8a8a8"/><rect x="1" y="3" width="1.2" height="1.2" fill="#a8a8a8"/><rect x="4" y="0" width="1.2" height="1.2" fill="#a8a8a8"/><rect x="4" y="3" width="1.2" height="1.2" fill="#a8a8a8"/><rect x="7" y="0" width="1.2" height="1.2" fill="#a8a8a8"/><rect x="7" y="3" width="1.2" height="1.2" fill="#a8a8a8"/><rect x="10" y="0" width="1.2" height="1.2" fill="#a8a8a8"/><rect x="10" y="3" width="1.2" height="1.2" fill="#a8a8a8"/></svg><div class="a" style="left:1735px;top:753px;width:228px;height:1px;background:#4a4a4a;"></div><div class="a" style="left:1735px;top:754px;width:228px;height:1px;background:#8a8a8a;"></div><svg class="a" style="left:1742px;top:761px" width="10" height="10" viewBox="0 0 10 10"><path d="M2,1 L8,5 L2,9Z" fill="#222"/></svg><div class="t" style="left:1755px;top:759px;color:#000;font-size:12.4px;line-height:14px">Shading</div><svg class="a" style="left:1945px;top:763px" width="14" height="6" viewBox="0 0 14 6"><rect x="1" y="0" width="1.2" height="1.2" fill="#a8a8a8"/><rect x="1" y="3" width="1.2" height="1.2" fill="#a8a8a8"/><rect x="4" y="0" width="1.2" height="1.2" fill="#a8a8a8"/><rect x="4" y="3" width="1.2" height="1.2" fill="#a8a8a8"/><rect x="7" y="0" width="1.2" height="1.2" fill="#a8a8a8"/><rect x="7" y="3" width="1.2" height="1.2" fill="#a8a8a8"/><rect x="10" y="0" width="1.2" height="1.2" fill="#a8a8a8"/><rect x="10" y="3" width="1.2" height="1.2" fill="#a8a8a8"/></svg><div class="a" style="left:1735px;top:777px;width:228px;height:1px;background:#4a4a4a;"></div><div class="a" style="left:1735px;top:778px;width:228px;height:1px;background:#8a8a8a;"></div><svg class="a" style="left:1742px;top:785px" width="10" height="10" viewBox="0 0 10 10"><path d="M2,1 L8,5 L2,9Z" fill="#222"/></svg><div class="t" style="left:1755px;top:783px;color:#000;font-size:12.4px;line-height:14px">Performance</div><svg class="a" style="left:1945px;top:787px" width="14" height="6" viewBox="0 0 14 6"><rect x="1" y="0" width="1.2" height="1.2" fill="#a8a8a8"/><rect x="1" y="3" width="1.2" height="1.2" fill="#a8a8a8"/><rect x="4" y="0" width="1.2" height="1.2" fill="#a8a8a8"/><rect x="4" y="3" width="1.2" height="1.2" fill="#a8a8a8"/><rect x="7" y="0" width="1.2" height="1.2" fill="#a8a8a8"/><rect x="7" y="3" width="1.2" height="1.2" fill="#a8a8a8"/><rect x="10" y="0" width="1.2" height="1.2" fill="#a8a8a8"/><rect x="10" y="3" width="1.2" height="1.2" fill="#a8a8a8"/></svg><div class="a" style="left:1735px;top:801px;width:228px;height:1px;background:#4a4a4a;"></div><div class="a" style="left:1735px;top:802px;width:228px;height:1px;background:#8a8a8a;"></div><svg class="a" style="left:1742px;top:809px" width="10" height="10" viewBox="0 0 10 10"><path d="M2,1 L8,5 L2,9Z" fill="#222"/></svg><div class="t" style="left:1755px;top:807px;color:#000;font-size:12.4px;line-height:14px">Post Processing</div><svg class="a" style="left:1945px;top:811px" width="14" height="6" viewBox="0 0 14 6"><rect x="1" y="0" width="1.2" height="1.2" fill="#a8a8a8"/><rect x="1" y="3" width="1.2" height="1.2" fill="#a8a8a8"/><rect x="4" y="0" width="1.2" height="1.2" fill="#a8a8a8"/><rect x="4" y="3" width="1.2" height="1.2" fill="#a8a8a8"/><rect x="7" y="0" width="1.2" height="1.2" fill="#a8a8a8"/><rect x="7" y="3" width="1.2" height="1.2" fill="#a8a8a8"/><rect x="10" y="0" width="1.2" height="1.2" fill="#a8a8a8"/><rect x="10" y="3" width="1.2" height="1.2" fill="#a8a8a8"/></svg><div class="a" style="left:1735px;top:825px;width:228px;height:1px;background:#4a4a4a;"></div><div class="a" style="left:1735px;top:826px;width:228px;height:1px;background:#8a8a8a;"></div><svg class="a" style="left:1742px;top:833px" width="10" height="10" viewBox="0 0 10 10"><path d="M2,1 L8,5 L2,9Z" fill="#222"/></svg><div class="t" style="left:1755px;top:831px;color:#000;font-size:12.4px;line-height:14px">Metadata</div><svg class="a" style="left:1945px;top:835px" width="14" height="6" viewBox="0 0 14 6"><rect x="1" y="0" width="1.2" height="1.2" fill="#a8a8a8"/><rect x="1" y="3" width="1.2" height="1.2" fill="#a8a8a8"/><rect x="4" y="0" width="1.2" height="1.2" fill="#a8a8a8"/><rect x="4" y="3" width="1.2" height="1.2" fill="#a8a8a8"/><rect x="7" y="0" width="1.2" height="1.2" fill="#a8a8a8"/><rect x="7" y="3" width="1.2" height="1.2" fill="#a8a8a8"/><rect x="10" y="0" width="1.2" height="1.2" fill="#a8a8a8"/><rect x="10" y="3" width="1.2" height="1.2" fill="#a8a8a8"/></svg><div class="a" style="left:1735px;top:849px;width:228px;height:1px;background:#4a4a4a;"></div><div class="a" style="left:1735px;top:850px;width:228px;height:1px;background:#8a8a8a;"></div><svg class="a" style="left:1742px;top:857px" width="10" height="10" viewBox="0 0 10 10"><path d="M1,2 L9,2 L5,8Z" fill="#111"/></svg><div class="t" style="left:1755px;top:855px;color:#000;font-size:12.4px;line-height:14px">Output</div><svg class="a" style="left:1945px;top:859px" width="14" height="6" viewBox="0 0 14 6"><rect x="1" y="0" width="1.2" height="1.2" fill="#a8a8a8"/><rect x="1" y="3" width="1.2" height="1.2" fill="#a8a8a8"/><rect x="4" y="0" width="1.2" height="1.2" fill="#a8a8a8"/><rect x="4" y="3" width="1.2" height="1.2" fill="#a8a8a8"/><rect x="7" y="0" width="1.2" height="1.2" fill="#a8a8a8"/><rect x="7" y="3" width="1.2" height="1.2" fill="#a8a8a8"/><rect x="10" y="0" width="1.2" height="1.2" fill="#a8a8a8"/><rect x="10" y="3" width="1.2" height="1.2" fill="#a8a8a8"/></svg><div class="a" style="left:1738px;top:882px;width:202px;height:20px;background:linear-gradient(#9c9c9c,#b6b6b6);border:1px solid #191919;border-radius:5px 0 0 5px;"></div><div class="t" style="left:1745px;top:887px;color:#000;font-size:11px;">/tmp/</div><div class="a" style="left:1939px;top:882px;width:21px;height:20px;background:linear-gradient(#a6a6a6,#8e8e8e);border:1px solid #191919;border-radius:0 5px 5px 0;"></div><svg class="a" style="left:1941px;top:884px" width="16" height="16" viewBox="0 0 16 16"><path d="M2,5 H6 L7,3 H14 V13 H2Z" fill="#e8e0a0" stroke="#333" stroke-width="0.7"/><rect x="7" y="2" width="6" height="4" fill="#fff" stroke="#333" stroke-width="0.5"/></svg><div class="a" style="left:1741px;top:910px;width:14px;height:14px;background:linear-gradient(#525252,#3c3c3c);border:1px solid #191919;border-radius:3px;"></div><svg class="a" style="left:1742px;top:909px" width="14" height="14" viewBox="0 0 14 14"><path d="M2.5,7 L5.5,10.5 L11.5,2.5" stroke="#fff" stroke-width="2" fill="none"/></svg><div class="t" style="left:1762px;top:911px;color:#fff;font-size:11px;">Overwrite</div><div class="a" style="left:1856px;top:910px;width:14px;height:14px;background:linear-gradient(#525252,#3c3c3c);border:1px solid #191919;border-radius:3px;"></div><svg class="a" style="left:1857px;top:909px" width="14" height="14" viewBox="0 0 14 14"><path d="M2.5,7 L5.5,10.5 L11.5,2.5" stroke="#fff" stroke-width="2" fill="none"/></svg><div class="t" style="left:1878px;top:911px;color:#fff;font-size:11px;">File Extensions</div><div class="a" style="left:1741px;top:932px;width:14px;height:14px;background:linear-gradient(#525252,#3c3c3c);border:1px solid #191919;border-radius:3px;"></div><div class="t" style="left:1762px;top:934px;color:#000;font-size:11px;">Placeholders</div><div class="a" style="left:1856px;top:932px;width:14px;height:14px;background:linear-gradient(#525252,#3c3c3c);border:1px solid #191919;border-radius:3px;"></div><div class="t" style="left:1878px;top:934px;color:#000;font-size:11px;">Cache Result</div><div class="a" style="left:1738px;top:954px;width:107px;height:20px;background:linear-gradient(#525252,#3c3c3c);border:1px solid #191919;border-radius:5px;"></div><svg class="a" style="left:1744px;top:956px" width="14" height="16" viewBox="0 0 14 16"><rect x="1" y="1" width="11" height="14" fill="#eee" stroke="#222" stroke-width="0.7"/><rect x="2" y="3" width="9" height="6" fill="#e0a0a0"/><rect x="2" y="9" width="9" height="5" fill="#8080c0"/></svg><div class="t" style="left:1761px;top:959px;color:#fff;font-size:11px;">PNG</div><svg class="a" style="left:1834px;top:957px" width="8" height="14" viewBox="0 0 8 14"><path d="M4,1 L7.5,5.5 L0.5,5.5Z M4,13 L7.5,8.5 L0.5,8.5Z" fill="#c8c8c8"/></svg><div class="a" style="left:1853px;top:954px;width:107px;height:20px;background:linear-gradient(#525252,#3c3c3c);border:1px solid #191919;border-radius:5px;"></div><div class="a" style="left:1924px;top:955px;width:35px;height:18px;background:linear-gradient(#6a93d3,#4f78b8);border-radius:0 4px 4px 0"></div><div class="a" style="left:1887px;top:954px;width:1px;height:20px;background:#191919;"></div><div class="a" style="left:1923px;top:954px;width:1px;height:20px;background:#191919;"></div><div class="t" style="left:1853px;top:959px;width:34px;text-align:center;color:#fff;font-size:11px;">BW</div><div class="t" style="left:1887px;top:959px;width:36px;text-align:center;color:#fff;font-size:11px;">RGB</div><div class="t" style="left:1923px;top:959px;width:37px;text-align:center;color:#000;font-size:11px;">RGBA</div><div class="t" style="left:1745px;top:981px;color:#000;font-size:11px;">Color Depth:</div><div class="a" style="left:1817px;top:976px;width:143px;height:20px;background:linear-gradient(#525252,#3c3c3c);border:1px solid #191919;border-radius:5px;"></div><div class="a" style="left:1818px;top:977px;width:69px;height:18px;background:linear-gradient(#6a93d3,#4f78b8);border-radius:4px 0 0 4px"></div><div class="a" style="left:1887px;top:976px;width:1px;height:20px;background:#191919;"></div><div class="t" style="left:1817px;top:981px;width:70px;text-align:center;color:#000;font-size:11px;">8</div><div class="t" style="left:1887px;top:981px;width:73px;text-align:center;color:#fff;font-size:11px;">16</div><div class="a" style="left:1738px;top:999px;width:222px;height:19px;background:linear-gradient(#a9a9a9,#b9b9b9);border:1px solid #3a3a3a;border-radius:9px;"></div><div class="a" style="left:1739px;top:1000px;width:39px;height:17px;background:linear-gradient(#7e7e7e,#8a8a8a);border-radius:8px 0 0 8px"></div><div class="t" style="left:1752px;top:1003px;color:#000;font-size:11px;">Compression:</div><div class="t" style="left:1644px;top:1003px;width:300px;text-align:right;color:#000;font-size:11px;">15%</div><div class="a" style="left:1735px;top:1027px;width:228px;height:1px;background:#4a4a4a;"></div><div class="a" style="left:1735px;top:1028px;width:228px;height:1px;background:#8a8a8a;"></div><svg class="a" style="left:1742px;top:1036px" width="10" height="10" viewBox="0 0 10 10"><path d="M2,1 L8,5 L2,9Z" fill="#222"/></svg><div class="t" style="left:1755px;top:1034px;color:#000;font-size:12.4px;line-height:14px">Bake</div><svg class="a" style="left:1945px;top:1039px" width="14" height="6" viewBox="0 0 14 6"><rect x="1" y="0" width="1.2" height="1.2" fill="#a8a8a8"/><rect x="1" y="3" width="1.2" height="1.2" fill="#a8a8a8"/><rect x="4" y="0" width="1.2" height="1.2" fill="#a8a8a8"/><rect x="4" y="3" width="1.2" height="1.2" fill="#a8a8a8"/><rect x="7" y="0" width="1.2" height="1.2" fill="#a8a8a8"/><rect x="7" y="3" width="1.2" height="1.2" fill="#a8a8a8"/><rect x="10" y="0" width="1.2" height="1.2" fill="#a8a8a8"/><rect x="10" y="3" width="1.2" height="1.2" fill="#a8a8a8"/></svg><div class="a" style="left:1735px;top:1051px;width:228px;height:1px;background:#4a4a4a;"></div><div class="a" style="left:1735px;top:1052px;width:228px;height:1px;background:#8a8a8a;"></div><div class="a" style="left:1755px;top:1055px;width:14px;height:4px;overflow:hidden"><div style="width:14px;height:14px;border:1px solid #191919;border-radius:3px;background:#525252"></div></div><div class="a" style="left:1730px;top:274px;width:1px;height:785px;background:#8c8c8c;"></div><svg class="a" style="left:1730px;top:1047px" width="12" height="12" viewBox="0 0 12 12"><path d="M0,3 L9,12 M0,7 L5,12 M0,11 L1,12" stroke="#000" stroke-width="1.3"/><path d="M0,4.5 L7.5,12 M0,8.5 L3.5,12" stroke="#a0a0a0" stroke-width="1"/></svg><div class="a" style="left:1968px;top:305px;width:14px;height:750px;background:#5e5e5e;border:1px solid #555;border-radius:7px;"></div><div class="a" style="left:1968px;top:305px;width:14px;height:734px;background:linear-gradient(90deg,#7a7a7a,#9a9a9a,#7a7a7a);border:1px solid #5a5a5a;border-radius:7px;"></div>
</div>
</body></html>
